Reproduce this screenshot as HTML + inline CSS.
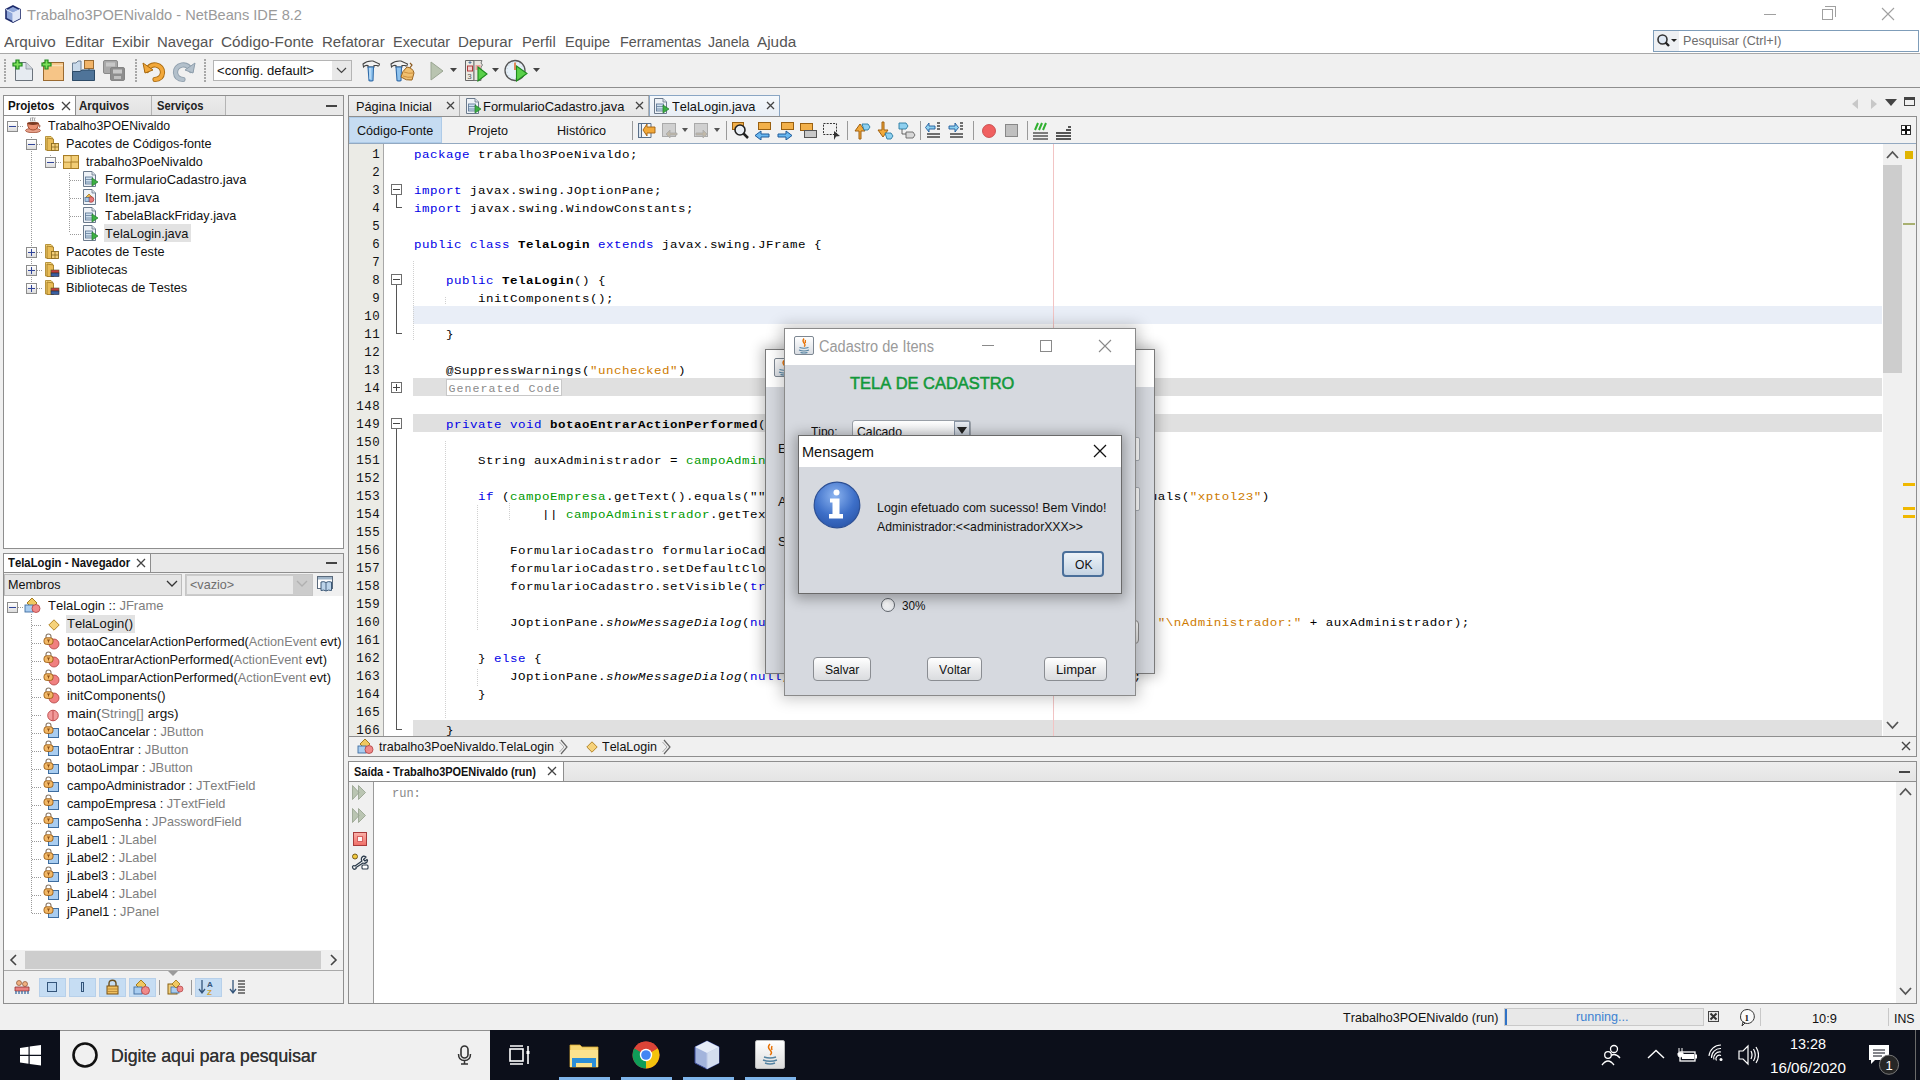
<!DOCTYPE html><html><head><meta charset="utf-8"><style>
html,body{margin:0;padding:0;width:1920px;height:1080px;overflow:hidden;background:#f0f0f0;}
body{position:relative;font-family:"Liberation Sans",sans-serif;}
.a{position:absolute;}
.t{position:absolute;white-space:pre;line-height:normal;font-kerning:none;}
</style></head><body>
<div class="a" style="left:0px;top:0px;width:1920px;height:53px;background:#ffffff;"></div>
<div class="a" style="left:0px;top:53px;width:1920px;height:1px;background:#a8a8a8;"></div>
<svg class="a" style="left:4px;top:5px;" width="18" height="18" viewBox="0 0 18 18"><path d="M9 1 L16 4.5 L16 13.5 L9 17 L2 13.5 L2 4.5 Z" fill="#8fa6d8" stroke="#1d2a6a" stroke-width="1.6"/><path d="M9 8 L16 4.5 M9 8 L2 4.5 M9 8 L9 17" stroke="#e8eefc" stroke-width="1"/><path d="M9 8 L16 4.5 L16 13.5 L9 17Z" fill="#dfe6f7"/></svg>
<div class="t" style="left:27px;top:6.78px;font-size:14.6px;color:#9a9a9a;font-family:'Liberation Sans', sans-serif;">Trabalho3POENivaldo - NetBeans IDE 8.2</div>
<div class="a" style="left:1764px;top:14px;width:12px;height:1px;background:#a0a0a0;"></div>
<div class="a" style="left:1822px;top:9px;width:11px;height:11px;border:1px solid #a0a0a0;box-sizing:border-box;"></div>
<div class="a" style="left:1825px;top:6px;width:11px;height:11px;border:1px solid #a0a0a0;box-sizing:border-box;border-left:none;border-bottom:none;"></div>
<svg class="a" style="left:1881px;top:7px;" width="14" height="14" viewBox="0 0 14 14"><path d="M1 1L13 13M13 1L1 13" stroke="#a0a0a0" stroke-width="1.1"/></svg>
<div class="t" style="left:3.8px;top:33.51px;font-size:14.9px;color:#555555;font-family:'Liberation Sans', sans-serif;transform:scaleX(1.0253);transform-origin:0 0;">Arquivo</div>
<div class="t" style="left:64.8px;top:33.51px;font-size:14.9px;color:#555555;font-family:'Liberation Sans', sans-serif;transform:scaleX(1.0110);transform-origin:0 0;">Editar</div>
<div class="t" style="left:111.7px;top:33.51px;font-size:14.9px;color:#555555;font-family:'Liberation Sans', sans-serif;transform:scaleX(1.0119);transform-origin:0 0;">Exibir</div>
<div class="t" style="left:156.5px;top:33.51px;font-size:14.9px;color:#555555;font-family:'Liberation Sans', sans-serif;transform:scaleX(1.0014);transform-origin:0 0;">Navegar</div>
<div class="t" style="left:221.1px;top:33.51px;font-size:14.9px;color:#555555;font-family:'Liberation Sans', sans-serif;transform:scaleX(1.0279);transform-origin:0 0;">Código-Fonte</div>
<div class="t" style="left:322.09999999999997px;top:33.51px;font-size:14.9px;color:#555555;font-family:'Liberation Sans', sans-serif;transform:scaleX(1.0095);transform-origin:0 0;">Refatorar</div>
<div class="t" style="left:393.2px;top:33.51px;font-size:14.9px;color:#555555;font-family:'Liberation Sans', sans-serif;transform:scaleX(0.9728);transform-origin:0 0;">Executar</div>
<div class="t" style="left:458.2px;top:33.51px;font-size:14.9px;color:#555555;font-family:'Liberation Sans', sans-serif;transform:scaleX(1.0162);transform-origin:0 0;">Depurar</div>
<div class="t" style="left:521.7px;top:33.51px;font-size:14.9px;color:#555555;font-family:'Liberation Sans', sans-serif;transform:scaleX(0.9927);transform-origin:0 0;">Perfil</div>
<div class="t" style="left:565.2px;top:33.51px;font-size:14.9px;color:#555555;font-family:'Liberation Sans', sans-serif;transform:scaleX(0.9742);transform-origin:0 0;">Equipe</div>
<div class="t" style="left:619.7px;top:33.51px;font-size:14.9px;color:#555555;font-family:'Liberation Sans', sans-serif;transform:scaleX(0.9614);transform-origin:0 0;">Ferramentas</div>
<div class="t" style="left:707.95px;top:33.51px;font-size:14.9px;color:#555555;font-family:'Liberation Sans', sans-serif;transform:scaleX(0.9440);transform-origin:0 0;">Janela</div>
<div class="t" style="left:757.2px;top:33.51px;font-size:14.9px;color:#555555;font-family:'Liberation Sans', sans-serif;transform:scaleX(1.0286);transform-origin:0 0;">Ajuda</div>
<div class="a" style="left:1653px;top:30px;width:266px;height:22px;background:#ffffff;border:1px solid #7f9db9;box-sizing:border-box;"></div>
<div class="a" style="left:1654px;top:31px;width:25px;height:20px;background:#eef0f3;"></div>
<svg class="a" style="left:1656px;top:33px;" width="22" height="16" viewBox="0 0 22 16"><circle cx="6.5" cy="6.5" r="4.5" fill="#dfe8f3" stroke="#333" stroke-width="1.6"/><path d="M9.5 9.5L13 13" stroke="#222" stroke-width="2.4"/><path d="M15 6L21 6L18 9Z" fill="#222"/></svg>
<div class="t" style="left:1683px;top:33.59px;font-size:12.6px;color:#6d6d6d;font-family:'Liberation Sans', sans-serif;">Pesquisar (Ctrl+I)</div>
<div class="a" style="left:0px;top:54px;width:1920px;height:33px;background:#f0f0f0;"></div>
<div class="a" style="left:0px;top:87px;width:1920px;height:1px;background:#8e8e8e;"></div>
<div class="a" style="left:3px;top:95px;width:341px;height:454px;background:#ffffff;border:1px solid #8e8e8e;box-sizing:border-box;"></div>
<div class="a" style="left:4px;top:96px;width:339px;height:19px;background:#e9e9e9;"></div>
<div class="a" style="left:4px;top:115px;width:339px;height:1px;background:#8e8e8e;"></div>
<div class="a" style="left:4px;top:96px;width:71px;height:19px;background:#ffffff;"></div>
<div class="a" style="left:75px;top:96px;width:1px;height:19px;background:#8e8e8e;"></div>
<div class="a" style="left:76px;top:96px;width:75px;height:19px;background:linear-gradient(#ececec,#e2e2e2);"></div>
<div class="a" style="left:151px;top:96px;width:1px;height:19px;background:#b4b4b4;"></div>
<div class="a" style="left:152px;top:96px;width:73px;height:19px;background:linear-gradient(#ececec,#e2e2e2);"></div>
<div class="a" style="left:225px;top:96px;width:1px;height:19px;background:#b4b4b4;"></div>
<div class="t" style="left:7.8px;top:98.77px;font-size:12.4px;color:#111;font-family:'Liberation Sans', sans-serif;font-weight:bold;transform:scaleX(0.9353);transform-origin:0 0;">Projetos</div>
<svg class="a" style="left:61px;top:101px;" width="10" height="10" viewBox="0 0 10 10"><path d="M1 1L9 9M9 1L1 9" stroke="#444" stroke-width="1.3"/></svg>
<div class="t" style="left:79.3px;top:98.77px;font-size:12.4px;color:#222;font-family:'Liberation Sans', sans-serif;font-weight:bold;transform:scaleX(0.9322);transform-origin:0 0;">Arquivos</div>
<div class="t" style="left:156.7px;top:98.77px;font-size:12.4px;color:#222;font-family:'Liberation Sans', sans-serif;font-weight:bold;transform:scaleX(0.9013);transform-origin:0 0;">Serviços</div>
<div class="a" style="left:326px;top:105px;width:11px;height:1px;background:#444;"></div>
<div class="a" style="left:326px;top:106px;width:11px;height:1px;background:#444;"></div>
<div class="a" style="left:3px;top:553px;width:341px;height:451px;background:#ffffff;border:1px solid #8e8e8e;box-sizing:border-box;"></div>
<div class="a" style="left:4px;top:554px;width:339px;height:19px;background:#e9e9e9;"></div>
<div class="a" style="left:4px;top:554px;width:146px;height:19px;background:#ffffff;"></div>
<div class="a" style="left:150px;top:554px;width:1px;height:19px;background:#8e8e8e;"></div>
<div class="a" style="left:4px;top:572px;width:339px;height:1px;background:#8e8e8e;"></div>
<div class="t" style="left:7.7px;top:555.77px;font-size:12.4px;color:#111;font-family:'Liberation Sans', sans-serif;font-weight:bold;transform:scaleX(0.9142);transform-origin:0 0;">TelaLogin - Navegador</div>
<svg class="a" style="left:136px;top:558px;" width="10" height="10" viewBox="0 0 10 10"><path d="M1 1L9 9M9 1L1 9" stroke="#444" stroke-width="1.3"/></svg>
<div class="a" style="left:326px;top:562px;width:11px;height:1px;background:#444;"></div>
<div class="a" style="left:326px;top:563px;width:11px;height:1px;background:#444;"></div>
<div class="a" style="left:4px;top:573px;width:339px;height:23px;background:#f0f0f0;"></div>
<div class="a" style="left:4px;top:574px;width:178px;height:22px;background:#e5e5e5;border:1px solid #bcbcbc;box-sizing:border-box;"></div>
<div class="t" style="left:8px;top:577.59px;font-size:12.6px;color:#111;font-family:'Liberation Sans', sans-serif;">Membros</div>
<svg class="a" style="left:166px;top:580px;" width="12" height="8" viewBox="0 0 12 8"><path d="M1 1L6 6L11 1" stroke="#333" stroke-width="1.3" fill="none"/></svg>
<div class="a" style="left:185px;top:574px;width:128px;height:22px;background:#cccccc;border:1px solid #c6c6c6;box-sizing:border-box;"></div>
<div class="a" style="left:187px;top:576px;width:106px;height:18px;background:#e9e9e9;"></div>
<div class="t" style="left:190px;top:577.59px;font-size:12.6px;color:#6e6e6e;font-family:'Liberation Sans', sans-serif;">&lt;vazio&gt;</div>
<svg class="a" style="left:296px;top:580px;" width="12" height="8" viewBox="0 0 12 8"><path d="M1 1L6 6L11 1" stroke="#b0b0b0" stroke-width="1.3" fill="none"/></svg>
<svg class="a" style="left:316px;top:575px;" width="18" height="17" viewBox="0 0 18 17"><rect x="1.5" y="1.5" width="15" height="12" fill="#ffffff" stroke="#5a6a7c" stroke-width="1"/><rect x="2" y="2" width="14" height="2.5" fill="#9fb4c8"/><path d="M5 7 Q8 6 10 7.5 Q12 6 15.5 7 V15.5 Q12 14.5 10 16 Q8 14.5 5 15.5Z" fill="#bcd4ea" stroke="#3e5a78" stroke-width="1"/><path d="M10 7.5 V16" stroke="#3e5a78" stroke-width="0.9"/></svg>
<div class="a" style="left:4px;top:950px;width:339px;height:20px;background:#f0f0f0;"></div>
<div class="a" style="left:25px;top:951px;width:296px;height:18px;background:#cdcdcd;"></div>
<svg class="a" style="left:9px;top:954px;" width="10" height="12" viewBox="0 0 10 12"><path d="M7 1L2 6L7 11" stroke="#444" stroke-width="1.6" fill="none"/></svg>
<svg class="a" style="left:328px;top:954px;" width="10" height="12" viewBox="0 0 10 12"><path d="M3 1L8 6L3 11" stroke="#444" stroke-width="1.6" fill="none"/></svg>
<div class="a" style="left:4px;top:970px;width:339px;height:1px;background:#a9a9a9;"></div>
<div class="a" style="left:4px;top:971px;width:339px;height:32px;background:#f0f0f0;"></div>
<div class="a" style="left:348px;top:95px;width:1569px;height:662px;background:#f0f0f0;"></div>
<div class="a" style="left:348px;top:116px;width:1569px;height:641px;background:#ffffff;border:1px solid #8e8e8e;box-sizing:border-box;"></div>
<div class="a" style="left:349px;top:117px;width:1567px;height:26px;background:#f2f2f2;"></div>
<div class="a" style="left:349px;top:143px;width:1567px;height:1px;background:#93a9c1;"></div>
<div class="a" style="left:349px;top:117px;width:93px;height:26px;background:#c6dcf2;border:1px solid #aecbe8;box-sizing:border-box;"></div>
<div class="t" style="left:357px;top:123.59px;font-size:12.6px;color:#111;font-family:'Liberation Sans', sans-serif;">Código-Fonte</div>
<div class="t" style="left:468px;top:123.59px;font-size:12.6px;color:#111;font-family:'Liberation Sans', sans-serif;">Projeto</div>
<div class="t" style="left:557px;top:123.59px;font-size:12.6px;color:#111;font-family:'Liberation Sans', sans-serif;">Histórico</div>
<div class="a" style="left:632px;top:121px;width:1px;height:19px;background:#9a9a9a;"></div>
<div class="a" style="left:349px;top:144px;width:34px;height:592px;background:#ebebe6;"></div>
<div class="a" style="left:383px;top:144px;width:1px;height:592px;background:#a8a8a8;"></div>
<div class="a" style="left:1883px;top:144px;width:33px;height:592px;background:#f0f0f0;"></div>
<div class="a" style="left:1883px;top:165px;width:19px;height:208px;background:#cdcdcd;"></div>
<svg class="a" style="left:1886px;top:150px;" width="13" height="9" viewBox="0 0 13 9"><path d="M1 8L6.5 2L12 8" stroke="#555" stroke-width="1.8" fill="none"/></svg>
<svg class="a" style="left:1886px;top:721px;" width="13" height="9" viewBox="0 0 13 9"><path d="M1 1L6.5 7L12 1" stroke="#555" stroke-width="1.8" fill="none"/></svg>
<div class="a" style="left:1905px;top:151px;width:8px;height:8px;background:#e0b400;"></div>
<div class="a" style="left:348px;top:736px;width:1569px;height:1px;background:#8e8e8e;"></div>
<div class="a" style="left:349px;top:737px;width:1567px;height:19px;background:#f0f0f0;"></div>
<div class="a" style="left:348px;top:756px;width:1569px;height:1px;background:#8e8e8e;"></div>
<div class="a" style="left:348px;top:761px;width:1569px;height:243px;background:#ffffff;border:1px solid #8e8e8e;box-sizing:border-box;"></div>
<div class="a" style="left:349px;top:762px;width:1567px;height:19px;background:linear-gradient(#eeeeee,#e4e4e4);"></div>
<div class="a" style="left:349px;top:762px;width:214px;height:19px;background:#ffffff;"></div>
<div class="a" style="left:563px;top:762px;width:1px;height:19px;background:#8e8e8e;"></div>
<div class="a" style="left:349px;top:781px;width:1567px;height:1px;background:#8e8e8e;"></div>
<div class="t" style="left:353.6px;top:764.77px;font-size:12.4px;color:#111;font-family:'Liberation Sans', sans-serif;font-weight:bold;transform:scaleX(0.8834);transform-origin:0 0;">Saída - Trabalho3POENivaldo (run)</div>
<svg class="a" style="left:547px;top:766px;" width="10" height="10" viewBox="0 0 10 10"><path d="M1 1L9 9M9 1L1 9" stroke="#444" stroke-width="1.3"/></svg>
<div class="a" style="left:1899px;top:771px;width:11px;height:1px;background:#444;"></div>
<div class="a" style="left:1899px;top:772px;width:11px;height:1px;background:#444;"></div>
<div class="a" style="left:349px;top:782px;width:24px;height:221px;background:#f0f0f0;"></div>
<div class="a" style="left:373px;top:782px;width:1px;height:221px;background:#9a9a9a;"></div>
<div class="a" style="left:1896px;top:782px;width:20px;height:221px;background:#f0f0f0;"></div>
<svg class="a" style="left:1899px;top:787px;" width="13" height="9" viewBox="0 0 13 9"><path d="M1 8L6.5 2L12 8" stroke="#555" stroke-width="1.8" fill="none"/></svg>
<svg class="a" style="left:1899px;top:987px;" width="13" height="9" viewBox="0 0 13 9"><path d="M1 1L6.5 7L12 1" stroke="#555" stroke-width="1.8" fill="none"/></svg>
<div class="t" style="left:392px;top:787.01px;font-size:12px;color:#888;font-family:'Liberation Mono', monospace;">run:</div>
<div class="a" style="left:0px;top:1004px;width:1920px;height:26px;background:#f0f0f0;"></div>
<div class="t" style="left:1343px;top:1010.59px;font-size:12.6px;color:#111;font-family:'Liberation Sans', sans-serif;">Trabalho3POENivaldo (run)</div>
<div class="a" style="left:1504px;top:1008px;width:200px;height:18px;background:#e8e8e8;border:1px solid #c9c9c9;box-sizing:border-box;"></div>
<div class="a" style="left:1505px;top:1009px;width:1px;height:16px;background:#3072c6;"></div>
<div class="a" style="left:1506px;top:1009px;width:1px;height:16px;background:#3072c6;"></div>
<div class="t" style="left:1576px;top:1009.59px;font-size:12.6px;color:#3c82d2;font-family:'Liberation Sans', sans-serif;">running...</div>
<div class="t" style="left:1812px;top:1011.41px;font-size:12.8px;color:#111;font-family:'Liberation Sans', sans-serif;">10:9</div>
<div class="a" style="left:1888px;top:1008px;width:1px;height:18px;background:#c8c8c8;"></div>
<div class="t" style="left:1894px;top:1011.41px;font-size:12.8px;color:#111;font-family:'Liberation Sans', sans-serif;transform:scaleX(0.9607);transform-origin:0 0;">INS</div>
<div class="a" style="left:1760px;top:1008px;width:1px;height:18px;background:#c8c8c8;"></div>
<div class="a" style="left:0px;top:1030px;width:1920px;height:50px;background:#0c0f1a;"></div>
<div class="a" style="left:60px;top:1030px;width:430px;height:50px;background:#f0f0f0;"></div>
<div class="a" style="left:60px;top:1030px;width:430px;height:1px;background:#8e8e8e;"></div>
<div class="t" style="left:111px;top:1045.98px;font-size:17.7px;color:#333;font-family:'Liberation Sans', sans-serif;">Digite aqui para pesquisar</div>
<div class="a" style="left:31px;top:137px;width:1px;height:151px;background:repeating-linear-gradient(180deg,#9a9a9a 0 1px,transparent 1px 2px);"></div>
<div class="a" style="left:50px;top:155px;width:1px;height:8px;background:repeating-linear-gradient(180deg,#9a9a9a 0 1px,transparent 1px 2px);"></div>
<div class="a" style="left:69px;top:173px;width:1px;height:60px;background:repeating-linear-gradient(180deg,#9a9a9a 0 1px,transparent 1px 2px);"></div>
<div class="a" style="left:104px;top:224px;width:87px;height:18px;background:#e2e2e2;"></div>
<div class="t" style="left:47.9px;top:118.59px;font-size:12.6px;color:#111;font-family:'Liberation Sans', sans-serif;transform:scaleX(0.9747);transform-origin:0 0;">Trabalho3POENivaldo</div>
<div class="a" style="left:7px;top:121px;width:11px;height:11px;box-sizing:border-box;border:1px solid #8c8c8c;background:linear-gradient(#ffffff,#dcdcdc);"></div>
<div class="a" style="left:9px;top:126px;width:7px;height:1px;background:#31459a;"></div>
<div class="a" style="left:18px;top:126px;width:6px;height:1px;background:repeating-linear-gradient(90deg,#9a9a9a 0 1px,transparent 1px 2px);"></div>
<svg class="a" style="left:25px;top:117px;" width="16" height="16" viewBox="0 0 16 16"><path d="M6 0.5 Q5 2.5 6 4.5 M8 0 Q7 2.5 8 4.5 M10 0.5 Q9 2.5 10 4.5" stroke="#777" stroke-width="0.8" fill="none"/><ellipse cx="8" cy="13.5" rx="7.5" ry="2.2" fill="#e6a08a" stroke="#a04a30" stroke-width="0.8"/><path d="M2.5 6 L13.5 6 Q13.5 13 8 13 Q2.5 13 2.5 6Z" fill="#e98f70" stroke="#9c4427" stroke-width="0.9"/><ellipse cx="8" cy="6.5" rx="5.3" ry="1.4" fill="#7a3a22"/><path d="M13.5 7.5 Q16 8 14.5 10.5" stroke="#9c4427" stroke-width="1" fill="none"/></svg>
<div class="t" style="left:66.39999999999999px;top:136.59px;font-size:12.6px;color:#111;font-family:'Liberation Sans', sans-serif;transform:scaleX(1.0049);transform-origin:0 0;">Pacotes de Códigos-fonte</div>
<div class="a" style="left:26px;top:139px;width:11px;height:11px;box-sizing:border-box;border:1px solid #8c8c8c;background:linear-gradient(#ffffff,#dcdcdc);"></div>
<div class="a" style="left:28px;top:144px;width:7px;height:1px;background:#31459a;"></div>
<div class="a" style="left:37px;top:144px;width:6px;height:1px;background:repeating-linear-gradient(90deg,#9a9a9a 0 1px,transparent 1px 2px);"></div>
<svg class="a" style="left:44px;top:135px;" width="16" height="17" viewBox="0 0 16 17"><path d="M1.5 1.5 L7 1.5 L8.5 3 L8.5 15 L1.5 15Z" fill="#f2d37a" stroke="#b08a30" stroke-width="0.9"/><path d="M3 3 L9.5 4 L9.5 15.5 L3 15.5Z" fill="#e9bd58" stroke="#a57c22" stroke-width="0.9"/><rect x="7.5" y="8.5" width="7" height="7" fill="#f3cf7a" stroke="#8a6a20" stroke-width="0.9"/><path d="M7.5 12H14.5M11 8.5V15.5" stroke="#8a6a20" stroke-width="0.8"/></svg>
<div class="t" style="left:85.5px;top:154.59px;font-size:12.6px;color:#111;font-family:'Liberation Sans', sans-serif;transform:scaleX(0.9976);transform-origin:0 0;">trabalho3PoeNivaldo</div>
<div class="a" style="left:45px;top:157px;width:11px;height:11px;box-sizing:border-box;border:1px solid #8c8c8c;background:linear-gradient(#ffffff,#dcdcdc);"></div>
<div class="a" style="left:47px;top:162px;width:7px;height:1px;background:#31459a;"></div>
<div class="a" style="left:56px;top:162px;width:6px;height:1px;background:repeating-linear-gradient(90deg,#9a9a9a 0 1px,transparent 1px 2px);"></div>
<svg class="a" style="left:63px;top:154px;" width="16" height="16" viewBox="0 0 16 16"><rect x="0.5" y="1.5" width="15" height="13" fill="#f2cd75" stroke="#a87d26" stroke-width="1"/><path d="M0.5 8H15.5M8 1.5V14.5" stroke="#a87d26" stroke-width="1"/><rect x="1.5" y="2.5" width="6" height="5" fill="#f8dc98"/></svg>
<div class="t" style="left:104.5px;top:172.59px;font-size:12.6px;color:#111;font-family:'Liberation Sans', sans-serif;transform:scaleX(1.0264);transform-origin:0 0;">FormularioCadastro.java</div>
<div class="a" style="left:70px;top:180px;width:11px;height:1px;background:repeating-linear-gradient(90deg,#9a9a9a 0 1px,transparent 1px 2px);"></div>
<svg class="a" style="left:82px;top:171px;" width="17" height="17" viewBox="0 0 17 17"><path d="M1.5 0.5 L10 0.5 L13.5 4 L13.5 15.5 L1.5 15.5Z" fill="#eef2f7" stroke="#6b7a8c" stroke-width="1"/><path d="M10 0.5 L10 4 L13.5 4" fill="#d8dee6" stroke="#6b7a8c" stroke-width="0.8"/><rect x="3.5" y="6" width="7" height="7" fill="#cfe0ef" stroke="#55708f" stroke-width="0.8"/><path d="M3.5 8.5H10.5M3.5 11H10.5" stroke="#55708f" stroke-width="0.7"/><path d="M10 7 L16 11 L10 15Z" fill="#3cb043" stroke="#207a28" stroke-width="0.7"/></svg>
<div class="t" style="left:104.5px;top:190.59px;font-size:12.6px;color:#111;font-family:'Liberation Sans', sans-serif;transform:scaleX(1.0661);transform-origin:0 0;">Item.java</div>
<div class="a" style="left:70px;top:198px;width:11px;height:1px;background:repeating-linear-gradient(90deg,#9a9a9a 0 1px,transparent 1px 2px);"></div>
<svg class="a" style="left:82px;top:189px;" width="17" height="17" viewBox="0 0 17 17"><path d="M1.5 0.5 L10 0.5 L13.5 4 L13.5 15.5 L1.5 15.5Z" fill="#eef2f7" stroke="#6b7a8c" stroke-width="1"/><path d="M10 0.5 L10 4 L13.5 4" fill="#d8dee6" stroke="#6b7a8c" stroke-width="0.8"/><path d="M7 5 L10 8 L7 11 L4 8Z" fill="#e8b850" stroke="#9a6a10" stroke-width="0.7"/><circle cx="9" cy="10.5" r="2.8" fill="#e67878" stroke="#a03030" stroke-width="0.7"/><rect x="3" y="8.5" width="4" height="4" fill="#a8c8e8" stroke="#4a6a8a" stroke-width="0.7"/></svg>
<div class="t" style="left:104.5px;top:208.59px;font-size:12.6px;color:#111;font-family:'Liberation Sans', sans-serif;transform:scaleX(1.0034);transform-origin:0 0;">TabelaBlackFriday.java</div>
<div class="a" style="left:70px;top:216px;width:11px;height:1px;background:repeating-linear-gradient(90deg,#9a9a9a 0 1px,transparent 1px 2px);"></div>
<svg class="a" style="left:82px;top:207px;" width="17" height="17" viewBox="0 0 17 17"><path d="M1.5 0.5 L10 0.5 L13.5 4 L13.5 15.5 L1.5 15.5Z" fill="#eef2f7" stroke="#6b7a8c" stroke-width="1"/><path d="M10 0.5 L10 4 L13.5 4" fill="#d8dee6" stroke="#6b7a8c" stroke-width="0.8"/><rect x="3.5" y="6" width="7" height="7" fill="#cfe0ef" stroke="#55708f" stroke-width="0.8"/><path d="M3.5 8.5H10.5M3.5 11H10.5" stroke="#55708f" stroke-width="0.7"/><path d="M10 7 L16 11 L10 15Z" fill="#3cb043" stroke="#207a28" stroke-width="0.7"/></svg>
<div class="t" style="left:104.5px;top:226.59px;font-size:12.6px;color:#111;font-family:'Liberation Sans', sans-serif;transform:scaleX(1.0164);transform-origin:0 0;">TelaLogin.java</div>
<div class="a" style="left:70px;top:234px;width:11px;height:1px;background:repeating-linear-gradient(90deg,#9a9a9a 0 1px,transparent 1px 2px);"></div>
<svg class="a" style="left:82px;top:225px;" width="17" height="17" viewBox="0 0 17 17"><path d="M1.5 0.5 L10 0.5 L13.5 4 L13.5 15.5 L1.5 15.5Z" fill="#eef2f7" stroke="#6b7a8c" stroke-width="1"/><path d="M10 0.5 L10 4 L13.5 4" fill="#d8dee6" stroke="#6b7a8c" stroke-width="0.8"/><rect x="3.5" y="6" width="7" height="7" fill="#cfe0ef" stroke="#55708f" stroke-width="0.8"/><path d="M3.5 8.5H10.5M3.5 11H10.5" stroke="#55708f" stroke-width="0.7"/><path d="M10 7 L16 11 L10 15Z" fill="#3cb043" stroke="#207a28" stroke-width="0.7"/></svg>
<div class="t" style="left:66.39999999999999px;top:244.59px;font-size:12.6px;color:#111;font-family:'Liberation Sans', sans-serif;transform:scaleX(1.0045);transform-origin:0 0;">Pacotes de Teste</div>
<div class="a" style="left:26px;top:247px;width:11px;height:11px;box-sizing:border-box;border:1px solid #8c8c8c;background:linear-gradient(#ffffff,#dcdcdc);"></div>
<div class="a" style="left:28px;top:252px;width:7px;height:1px;background:#31459a;"></div>
<div class="a" style="left:31px;top:249px;width:1px;height:7px;background:#31459a;"></div>
<div class="a" style="left:37px;top:252px;width:6px;height:1px;background:repeating-linear-gradient(90deg,#9a9a9a 0 1px,transparent 1px 2px);"></div>
<svg class="a" style="left:44px;top:243px;" width="16" height="17" viewBox="0 0 16 17"><path d="M1.5 1.5 L7 1.5 L8.5 3 L8.5 15 L1.5 15Z" fill="#f2d37a" stroke="#b08a30" stroke-width="0.9"/><path d="M3 3 L9.5 4 L9.5 15.5 L3 15.5Z" fill="#e9bd58" stroke="#a57c22" stroke-width="0.9"/><rect x="7.5" y="8.5" width="7" height="7" fill="#f3cf7a" stroke="#8a6a20" stroke-width="0.9"/><path d="M7.5 12H14.5M11 8.5V15.5" stroke="#8a6a20" stroke-width="0.8"/></svg>
<div class="t" style="left:66.39999999999999px;top:262.59px;font-size:12.6px;color:#111;font-family:'Liberation Sans', sans-serif;transform:scaleX(1.0093);transform-origin:0 0;">Bibliotecas</div>
<div class="a" style="left:26px;top:265px;width:11px;height:11px;box-sizing:border-box;border:1px solid #8c8c8c;background:linear-gradient(#ffffff,#dcdcdc);"></div>
<div class="a" style="left:28px;top:270px;width:7px;height:1px;background:#31459a;"></div>
<div class="a" style="left:31px;top:267px;width:1px;height:7px;background:#31459a;"></div>
<div class="a" style="left:37px;top:270px;width:6px;height:1px;background:repeating-linear-gradient(90deg,#9a9a9a 0 1px,transparent 1px 2px);"></div>
<svg class="a" style="left:44px;top:261px;" width="16" height="17" viewBox="0 0 16 17"><path d="M1.5 1.5 L7 1.5 L8.5 3 L8.5 15 L1.5 15Z" fill="#f2d37a" stroke="#b08a30" stroke-width="0.9"/><path d="M3 3 L9.5 4 L9.5 15.5 L3 15.5Z" fill="#e9bd58" stroke="#a57c22" stroke-width="0.9"/><rect x="7" y="9" width="8" height="3" fill="#c23e3e" stroke="#552" stroke-width="0.6"/><rect x="7" y="12" width="8" height="3.5" fill="#3a5fa0" stroke="#223" stroke-width="0.6"/></svg>
<div class="t" style="left:66.39999999999999px;top:280.59px;font-size:12.6px;color:#111;font-family:'Liberation Sans', sans-serif;transform:scaleX(1.0120);transform-origin:0 0;">Bibliotecas de Testes</div>
<div class="a" style="left:26px;top:283px;width:11px;height:11px;box-sizing:border-box;border:1px solid #8c8c8c;background:linear-gradient(#ffffff,#dcdcdc);"></div>
<div class="a" style="left:28px;top:288px;width:7px;height:1px;background:#31459a;"></div>
<div class="a" style="left:31px;top:285px;width:1px;height:7px;background:#31459a;"></div>
<div class="a" style="left:37px;top:288px;width:6px;height:1px;background:repeating-linear-gradient(90deg,#9a9a9a 0 1px,transparent 1px 2px);"></div>
<svg class="a" style="left:44px;top:279px;" width="16" height="17" viewBox="0 0 16 17"><path d="M1.5 1.5 L7 1.5 L8.5 3 L8.5 15 L1.5 15Z" fill="#f2d37a" stroke="#b08a30" stroke-width="0.9"/><path d="M3 3 L9.5 4 L9.5 15.5 L3 15.5Z" fill="#e9bd58" stroke="#a57c22" stroke-width="0.9"/><rect x="7" y="9" width="8" height="3" fill="#c23e3e" stroke="#552" stroke-width="0.6"/><rect x="7" y="12" width="8" height="3.5" fill="#3a5fa0" stroke="#223" stroke-width="0.6"/></svg>
<div class="a" style="left:31px;top:614px;width:1px;height:300px;background:repeating-linear-gradient(180deg,#9a9a9a 0 1px,transparent 1px 2px);"></div>
<div class="a" style="left:66px;top:615px;width:69px;height:18px;background:#e2e2e2;"></div>
<div class="t" style="left:47.599999999999994px;top:599.09px;font-size:12.6px;transform:scaleX(1.0308);transform-origin:0 0;"><span style="color:#111">TelaLogin :: </span><span style="color:#7e7e7e">JFrame</span></div>
<div class="a" style="left:7px;top:601.5px;width:11px;height:11px;box-sizing:border-box;border:1px solid #8c8c8c;background:linear-gradient(#ffffff,#dcdcdc);"></div>
<div class="a" style="left:9px;top:606.5px;width:7px;height:1px;background:#31459a;"></div>
<div class="a" style="left:18px;top:606.5px;width:6px;height:1px;background:repeating-linear-gradient(90deg,#9a9a9a 0 1px,transparent 1px 2px);"></div>
<svg class="a" style="left:24px;top:597px;" width="18" height="17" viewBox="0 0 18 17"><path d="M8 1 L13 6 L8 11 L3 6Z" fill="#f0c860" stroke="#9a7010" stroke-width="0.9"/><rect x="1" y="8" width="8" height="7" fill="#a9cdf0" stroke="#3f6ea0" stroke-width="0.9"/><circle cx="12" cy="11.5" r="4" fill="#f08a8a" stroke="#b04040" stroke-width="0.8"/></svg>
<div class="t" style="left:66.5px;top:617.09px;font-size:12.6px;transform:scaleX(1.0356);transform-origin:0 0;"><span style="color:#111">TelaLogin()</span></div>
<div class="a" style="left:32px;top:624.5px;width:10px;height:1px;background:repeating-linear-gradient(90deg,#9a9a9a 0 1px,transparent 1px 2px);"></div>
<svg class="a" style="left:48px;top:618.5px;" width="12" height="12" viewBox="0 0 12 12"><path d="M6 0.8 L11.2 6 L6 11.2 L0.8 6Z" fill="#f6d27a" stroke="#b5862a" stroke-width="1"/></svg>
<div class="t" style="left:66.5px;top:635.09px;font-size:12.6px;transform:scaleX(1.0105);transform-origin:0 0;"><span style="color:#111">botaoCancelarActionPerformed(</span><span style="color:#7e7e7e">ActionEvent</span><span style="color:#111"> evt)</span></div>
<div class="a" style="left:32px;top:642.5px;width:10px;height:1px;background:repeating-linear-gradient(90deg,#9a9a9a 0 1px,transparent 1px 2px);"></div>
<svg class="a" style="left:43px;top:632.5px;" width="17" height="17" viewBox="0 0 17 17"><circle cx="11" cy="11" r="5" fill="#f08080" stroke="#b04040" stroke-width="0.8"/></svg>
<svg class="a" style="left:43px;top:632.5px;" width="11" height="12" viewBox="0 0 11 12"><path d="M3 5 V3.5 Q3 1 5.5 1 Q8 1 8 3.5 V5" stroke="#8a7a6a" stroke-width="1.1" fill="none"/><rect x="1" y="4.8" width="9" height="6.6" rx="2.5" fill="#f2b866" stroke="#9a5a10" stroke-width="0.9"/><path d="M4 7 H7 M5.5 7 V9.5" stroke="#8a4a10" stroke-width="0.9"/></svg>
<div class="t" style="left:66.5px;top:653.09px;font-size:12.6px;transform:scaleX(1.0171);transform-origin:0 0;"><span style="color:#111">botaoEntrarActionPerformed(</span><span style="color:#7e7e7e">ActionEvent</span><span style="color:#111"> evt)</span></div>
<div class="a" style="left:32px;top:660.5px;width:10px;height:1px;background:repeating-linear-gradient(90deg,#9a9a9a 0 1px,transparent 1px 2px);"></div>
<svg class="a" style="left:43px;top:650.5px;" width="17" height="17" viewBox="0 0 17 17"><circle cx="11" cy="11" r="5" fill="#f08080" stroke="#b04040" stroke-width="0.8"/></svg>
<svg class="a" style="left:43px;top:650.5px;" width="11" height="12" viewBox="0 0 11 12"><path d="M3 5 V3.5 Q3 1 5.5 1 Q8 1 8 3.5 V5" stroke="#8a7a6a" stroke-width="1.1" fill="none"/><rect x="1" y="4.8" width="9" height="6.6" rx="2.5" fill="#f2b866" stroke="#9a5a10" stroke-width="0.9"/><path d="M4 7 H7 M5.5 7 V9.5" stroke="#8a4a10" stroke-width="0.9"/></svg>
<div class="t" style="left:66.5px;top:671.09px;font-size:12.6px;transform:scaleX(1.0161);transform-origin:0 0;"><span style="color:#111">botaoLimparActionPerformed(</span><span style="color:#7e7e7e">ActionEvent</span><span style="color:#111"> evt)</span></div>
<div class="a" style="left:32px;top:678.5px;width:10px;height:1px;background:repeating-linear-gradient(90deg,#9a9a9a 0 1px,transparent 1px 2px);"></div>
<svg class="a" style="left:43px;top:668.5px;" width="17" height="17" viewBox="0 0 17 17"><circle cx="11" cy="11" r="5" fill="#f08080" stroke="#b04040" stroke-width="0.8"/></svg>
<svg class="a" style="left:43px;top:668.5px;" width="11" height="12" viewBox="0 0 11 12"><path d="M3 5 V3.5 Q3 1 5.5 1 Q8 1 8 3.5 V5" stroke="#8a7a6a" stroke-width="1.1" fill="none"/><rect x="1" y="4.8" width="9" height="6.6" rx="2.5" fill="#f2b866" stroke="#9a5a10" stroke-width="0.9"/><path d="M4 7 H7 M5.5 7 V9.5" stroke="#8a4a10" stroke-width="0.9"/></svg>
<div class="t" style="left:66.5px;top:689.09px;font-size:12.6px;transform:scaleX(1.0277);transform-origin:0 0;"><span style="color:#111">initComponents()</span></div>
<div class="a" style="left:32px;top:696.5px;width:10px;height:1px;background:repeating-linear-gradient(90deg,#9a9a9a 0 1px,transparent 1px 2px);"></div>
<svg class="a" style="left:43px;top:686.5px;" width="17" height="17" viewBox="0 0 17 17"><circle cx="11" cy="11" r="5" fill="#f08080" stroke="#b04040" stroke-width="0.8"/></svg>
<svg class="a" style="left:43px;top:686.5px;" width="11" height="12" viewBox="0 0 11 12"><path d="M3 5 V3.5 Q3 1 5.5 1 Q8 1 8 3.5 V5" stroke="#8a7a6a" stroke-width="1.1" fill="none"/><rect x="1" y="4.8" width="9" height="6.6" rx="2.5" fill="#f2b866" stroke="#9a5a10" stroke-width="0.9"/><path d="M4 7 H7 M5.5 7 V9.5" stroke="#8a4a10" stroke-width="0.9"/></svg>
<div class="t" style="left:66.5px;top:707.09px;font-size:12.6px;transform:scaleX(1.0769);transform-origin:0 0;"><span style="color:#111">main(</span><span style="color:#7e7e7e">String[]</span><span style="color:#111"> args)</span></div>
<div class="a" style="left:32px;top:714.5px;width:10px;height:1px;background:repeating-linear-gradient(90deg,#9a9a9a 0 1px,transparent 1px 2px);"></div>
<svg class="a" style="left:47px;top:708.5px;" width="12" height="13" viewBox="0 0 12 13"><circle cx="6" cy="6.5" r="5.3" fill="#f29a9a" stroke="#b44" stroke-width="0.9"/><path d="M6 1.2V11.8" stroke="#b44" stroke-width="0.9"/></svg>
<div class="t" style="left:66.5px;top:725.09px;font-size:12.6px;transform:scaleX(1.0112);transform-origin:0 0;"><span style="color:#111">botaoCancelar : </span><span style="color:#7e7e7e">JButton</span></div>
<div class="a" style="left:32px;top:732.5px;width:10px;height:1px;background:repeating-linear-gradient(90deg,#9a9a9a 0 1px,transparent 1px 2px);"></div>
<svg class="a" style="left:43px;top:721.5px;" width="17" height="17" viewBox="0 0 17 17"><rect x="5.5" y="6.5" width="10" height="9" fill="#a9cdf0" stroke="#3f6ea0" stroke-width="1"/></svg>
<svg class="a" style="left:43px;top:721.5px;" width="11" height="12" viewBox="0 0 11 12"><path d="M3 5 V3.5 Q3 1 5.5 1 Q8 1 8 3.5 V5" stroke="#8a7a6a" stroke-width="1.1" fill="none"/><rect x="1" y="4.8" width="9" height="6.6" rx="2.5" fill="#f2b866" stroke="#9a5a10" stroke-width="0.9"/><path d="M4 7 H7 M5.5 7 V9.5" stroke="#8a4a10" stroke-width="0.9"/></svg>
<div class="t" style="left:66.5px;top:743.09px;font-size:12.6px;transform:scaleX(1.0195);transform-origin:0 0;"><span style="color:#111">botaoEntrar : </span><span style="color:#7e7e7e">JButton</span></div>
<div class="a" style="left:32px;top:750.5px;width:10px;height:1px;background:repeating-linear-gradient(90deg,#9a9a9a 0 1px,transparent 1px 2px);"></div>
<svg class="a" style="left:43px;top:739.5px;" width="17" height="17" viewBox="0 0 17 17"><rect x="5.5" y="6.5" width="10" height="9" fill="#a9cdf0" stroke="#3f6ea0" stroke-width="1"/></svg>
<svg class="a" style="left:43px;top:739.5px;" width="11" height="12" viewBox="0 0 11 12"><path d="M3 5 V3.5 Q3 1 5.5 1 Q8 1 8 3.5 V5" stroke="#8a7a6a" stroke-width="1.1" fill="none"/><rect x="1" y="4.8" width="9" height="6.6" rx="2.5" fill="#f2b866" stroke="#9a5a10" stroke-width="0.9"/><path d="M4 7 H7 M5.5 7 V9.5" stroke="#8a4a10" stroke-width="0.9"/></svg>
<div class="t" style="left:66.5px;top:761.09px;font-size:12.6px;transform:scaleX(1.0201);transform-origin:0 0;"><span style="color:#111">botaoLimpar : </span><span style="color:#7e7e7e">JButton</span></div>
<div class="a" style="left:32px;top:768.5px;width:10px;height:1px;background:repeating-linear-gradient(90deg,#9a9a9a 0 1px,transparent 1px 2px);"></div>
<svg class="a" style="left:43px;top:757.5px;" width="17" height="17" viewBox="0 0 17 17"><rect x="5.5" y="6.5" width="10" height="9" fill="#a9cdf0" stroke="#3f6ea0" stroke-width="1"/></svg>
<svg class="a" style="left:43px;top:757.5px;" width="11" height="12" viewBox="0 0 11 12"><path d="M3 5 V3.5 Q3 1 5.5 1 Q8 1 8 3.5 V5" stroke="#8a7a6a" stroke-width="1.1" fill="none"/><rect x="1" y="4.8" width="9" height="6.6" rx="2.5" fill="#f2b866" stroke="#9a5a10" stroke-width="0.9"/><path d="M4 7 H7 M5.5 7 V9.5" stroke="#8a4a10" stroke-width="0.9"/></svg>
<div class="t" style="left:66.5px;top:779.09px;font-size:12.6px;transform:scaleX(1.0235);transform-origin:0 0;"><span style="color:#111">campoAdministrador : </span><span style="color:#7e7e7e">JTextField</span></div>
<div class="a" style="left:32px;top:786.5px;width:10px;height:1px;background:repeating-linear-gradient(90deg,#9a9a9a 0 1px,transparent 1px 2px);"></div>
<svg class="a" style="left:43px;top:775.5px;" width="17" height="17" viewBox="0 0 17 17"><rect x="5.5" y="6.5" width="10" height="9" fill="#a9cdf0" stroke="#3f6ea0" stroke-width="1"/></svg>
<svg class="a" style="left:43px;top:775.5px;" width="11" height="12" viewBox="0 0 11 12"><path d="M3 5 V3.5 Q3 1 5.5 1 Q8 1 8 3.5 V5" stroke="#8a7a6a" stroke-width="1.1" fill="none"/><rect x="1" y="4.8" width="9" height="6.6" rx="2.5" fill="#f2b866" stroke="#9a5a10" stroke-width="0.9"/><path d="M4 7 H7 M5.5 7 V9.5" stroke="#8a4a10" stroke-width="0.9"/></svg>
<div class="t" style="left:66.5px;top:797.09px;font-size:12.6px;transform:scaleX(1.0105);transform-origin:0 0;"><span style="color:#111">campoEmpresa : </span><span style="color:#7e7e7e">JTextField</span></div>
<div class="a" style="left:32px;top:804.5px;width:10px;height:1px;background:repeating-linear-gradient(90deg,#9a9a9a 0 1px,transparent 1px 2px);"></div>
<svg class="a" style="left:43px;top:793.5px;" width="17" height="17" viewBox="0 0 17 17"><rect x="5.5" y="6.5" width="10" height="9" fill="#a9cdf0" stroke="#3f6ea0" stroke-width="1"/></svg>
<svg class="a" style="left:43px;top:793.5px;" width="11" height="12" viewBox="0 0 11 12"><path d="M3 5 V3.5 Q3 1 5.5 1 Q8 1 8 3.5 V5" stroke="#8a7a6a" stroke-width="1.1" fill="none"/><rect x="1" y="4.8" width="9" height="6.6" rx="2.5" fill="#f2b866" stroke="#9a5a10" stroke-width="0.9"/><path d="M4 7 H7 M5.5 7 V9.5" stroke="#8a4a10" stroke-width="0.9"/></svg>
<div class="t" style="left:66.5px;top:815.09px;font-size:12.6px;transform:scaleX(1.0047);transform-origin:0 0;"><span style="color:#111">campoSenha : </span><span style="color:#7e7e7e">JPasswordField</span></div>
<div class="a" style="left:32px;top:822.5px;width:10px;height:1px;background:repeating-linear-gradient(90deg,#9a9a9a 0 1px,transparent 1px 2px);"></div>
<svg class="a" style="left:43px;top:811.5px;" width="17" height="17" viewBox="0 0 17 17"><rect x="5.5" y="6.5" width="10" height="9" fill="#a9cdf0" stroke="#3f6ea0" stroke-width="1"/></svg>
<svg class="a" style="left:43px;top:811.5px;" width="11" height="12" viewBox="0 0 11 12"><path d="M3 5 V3.5 Q3 1 5.5 1 Q8 1 8 3.5 V5" stroke="#8a7a6a" stroke-width="1.1" fill="none"/><rect x="1" y="4.8" width="9" height="6.6" rx="2.5" fill="#f2b866" stroke="#9a5a10" stroke-width="0.9"/><path d="M4 7 H7 M5.5 7 V9.5" stroke="#8a4a10" stroke-width="0.9"/></svg>
<div class="t" style="left:66.5px;top:833.09px;font-size:12.6px;transform:scaleX(1.0140);transform-origin:0 0;"><span style="color:#111">jLabel1 : </span><span style="color:#7e7e7e">JLabel</span></div>
<div class="a" style="left:32px;top:840.5px;width:10px;height:1px;background:repeating-linear-gradient(90deg,#9a9a9a 0 1px,transparent 1px 2px);"></div>
<svg class="a" style="left:43px;top:829.5px;" width="17" height="17" viewBox="0 0 17 17"><rect x="5.5" y="6.5" width="10" height="9" fill="#a9cdf0" stroke="#3f6ea0" stroke-width="1"/></svg>
<svg class="a" style="left:43px;top:829.5px;" width="11" height="12" viewBox="0 0 11 12"><path d="M3 5 V3.5 Q3 1 5.5 1 Q8 1 8 3.5 V5" stroke="#8a7a6a" stroke-width="1.1" fill="none"/><rect x="1" y="4.8" width="9" height="6.6" rx="2.5" fill="#f2b866" stroke="#9a5a10" stroke-width="0.9"/><path d="M4 7 H7 M5.5 7 V9.5" stroke="#8a4a10" stroke-width="0.9"/></svg>
<div class="t" style="left:66.5px;top:851.09px;font-size:12.6px;transform:scaleX(1.0140);transform-origin:0 0;"><span style="color:#111">jLabel2 : </span><span style="color:#7e7e7e">JLabel</span></div>
<div class="a" style="left:32px;top:858.5px;width:10px;height:1px;background:repeating-linear-gradient(90deg,#9a9a9a 0 1px,transparent 1px 2px);"></div>
<svg class="a" style="left:43px;top:847.5px;" width="17" height="17" viewBox="0 0 17 17"><rect x="5.5" y="6.5" width="10" height="9" fill="#a9cdf0" stroke="#3f6ea0" stroke-width="1"/></svg>
<svg class="a" style="left:43px;top:847.5px;" width="11" height="12" viewBox="0 0 11 12"><path d="M3 5 V3.5 Q3 1 5.5 1 Q8 1 8 3.5 V5" stroke="#8a7a6a" stroke-width="1.1" fill="none"/><rect x="1" y="4.8" width="9" height="6.6" rx="2.5" fill="#f2b866" stroke="#9a5a10" stroke-width="0.9"/><path d="M4 7 H7 M5.5 7 V9.5" stroke="#8a4a10" stroke-width="0.9"/></svg>
<div class="t" style="left:66.5px;top:869.09px;font-size:12.6px;transform:scaleX(1.0140);transform-origin:0 0;"><span style="color:#111">jLabel3 : </span><span style="color:#7e7e7e">JLabel</span></div>
<div class="a" style="left:32px;top:876.5px;width:10px;height:1px;background:repeating-linear-gradient(90deg,#9a9a9a 0 1px,transparent 1px 2px);"></div>
<svg class="a" style="left:43px;top:865.5px;" width="17" height="17" viewBox="0 0 17 17"><rect x="5.5" y="6.5" width="10" height="9" fill="#a9cdf0" stroke="#3f6ea0" stroke-width="1"/></svg>
<svg class="a" style="left:43px;top:865.5px;" width="11" height="12" viewBox="0 0 11 12"><path d="M3 5 V3.5 Q3 1 5.5 1 Q8 1 8 3.5 V5" stroke="#8a7a6a" stroke-width="1.1" fill="none"/><rect x="1" y="4.8" width="9" height="6.6" rx="2.5" fill="#f2b866" stroke="#9a5a10" stroke-width="0.9"/><path d="M4 7 H7 M5.5 7 V9.5" stroke="#8a4a10" stroke-width="0.9"/></svg>
<div class="t" style="left:66.5px;top:887.09px;font-size:12.6px;transform:scaleX(1.0140);transform-origin:0 0;"><span style="color:#111">jLabel4 : </span><span style="color:#7e7e7e">JLabel</span></div>
<div class="a" style="left:32px;top:894.5px;width:10px;height:1px;background:repeating-linear-gradient(90deg,#9a9a9a 0 1px,transparent 1px 2px);"></div>
<svg class="a" style="left:43px;top:883.5px;" width="17" height="17" viewBox="0 0 17 17"><rect x="5.5" y="6.5" width="10" height="9" fill="#a9cdf0" stroke="#3f6ea0" stroke-width="1"/></svg>
<svg class="a" style="left:43px;top:883.5px;" width="11" height="12" viewBox="0 0 11 12"><path d="M3 5 V3.5 Q3 1 5.5 1 Q8 1 8 3.5 V5" stroke="#8a7a6a" stroke-width="1.1" fill="none"/><rect x="1" y="4.8" width="9" height="6.6" rx="2.5" fill="#f2b866" stroke="#9a5a10" stroke-width="0.9"/><path d="M4 7 H7 M5.5 7 V9.5" stroke="#8a4a10" stroke-width="0.9"/></svg>
<div class="t" style="left:66.5px;top:905.09px;font-size:12.6px;transform:scaleX(1.0103);transform-origin:0 0;"><span style="color:#111">jPanel1 : </span><span style="color:#7e7e7e">JPanel</span></div>
<div class="a" style="left:32px;top:912.5px;width:10px;height:1px;background:repeating-linear-gradient(90deg,#9a9a9a 0 1px,transparent 1px 2px);"></div>
<svg class="a" style="left:43px;top:901.5px;" width="17" height="17" viewBox="0 0 17 17"><rect x="5.5" y="6.5" width="10" height="9" fill="#a9cdf0" stroke="#3f6ea0" stroke-width="1"/></svg>
<svg class="a" style="left:43px;top:901.5px;" width="11" height="12" viewBox="0 0 11 12"><path d="M3 5 V3.5 Q3 1 5.5 1 Q8 1 8 3.5 V5" stroke="#8a7a6a" stroke-width="1.1" fill="none"/><rect x="1" y="4.8" width="9" height="6.6" rx="2.5" fill="#f2b866" stroke="#9a5a10" stroke-width="0.9"/><path d="M4 7 H7 M5.5 7 V9.5" stroke="#8a4a10" stroke-width="0.9"/></svg>
<svg class="a" style="left:14px;top:978px;" width="17" height="17" viewBox="0 0 17 17"><circle cx="5" cy="5" r="2.5" fill="#f0b080" stroke="#8a5030" stroke-width="0.7"/><circle cx="11" cy="6" r="2.5" fill="#f0b080" stroke="#8a5030" stroke-width="0.7"/><path d="M1 9 H15 V13 H1Z" fill="#e98080" stroke="#903030" stroke-width="0.8"/><path d="M2 13 V16 M5 13V16 M8 13V16 M11 13V16 M14 13V16" stroke="#3a6aa0" stroke-width="1.3"/></svg>
<div class="a" style="left:39px;top:978px;width:27px;height:19px;background:#c6ddf3;border:1px solid #b7d0ea;box-sizing:border-box;"></div>
<div class="a" style="left:69px;top:978px;width:27px;height:19px;background:#c6ddf3;border:1px solid #b7d0ea;box-sizing:border-box;"></div>
<div class="a" style="left:99px;top:978px;width:27px;height:19px;background:#c6ddf3;border:1px solid #b7d0ea;box-sizing:border-box;"></div>
<div class="a" style="left:129px;top:978px;width:27px;height:19px;background:#c6ddf3;border:1px solid #b7d0ea;box-sizing:border-box;"></div>
<div class="a" style="left:195px;top:978px;width:27px;height:19px;background:#c6ddf3;border:1px solid #b7d0ea;box-sizing:border-box;"></div>
<div class="a" style="left:47px;top:982px;width:10px;height:10px;background:#b9d5f0;border:1px solid #34557a;box-sizing:border-box;"></div>
<div class="a" style="left:81px;top:982px;width:3px;height:10px;background:#b9d5f0;border:1px solid #34557a;box-sizing:border-box;"></div>
<svg class="a" style="left:104px;top:979px;" width="17" height="16" viewBox="0 0 17 16"><path d="M5 7 V4.5 Q5 1.2 8.5 1.2 Q12 1.2 12 4.5 V7" stroke="#6a5020" stroke-width="1.4" fill="none"/><rect x="3" y="7" width="11" height="8" fill="#f0c060" stroke="#7a5010" stroke-width="1"/><path d="M3 10H14M3 12.5H14" stroke="#b08030" stroke-width="0.8"/></svg>
<svg class="a" style="left:133px;top:979px;" width="20" height="17" viewBox="0 0 20 17"><path d="M8 1 L13 6 L8 11 L3 6Z" fill="#f0c860" stroke="#9a7010" stroke-width="0.9"/><rect x="1" y="8" width="8" height="7" fill="#a9cdf0" stroke="#3f6ea0" stroke-width="0.9"/><circle cx="12.5" cy="11.5" r="4" fill="#f08a8a" stroke="#b04040" stroke-width="0.8"/></svg>
<div class="a" style="left:159px;top:980px;width:1px;height:15px;background:#9a9a9a;"></div>
<svg class="a" style="left:167px;top:979px;" width="17" height="17" viewBox="0 0 17 17"><rect x="1" y="5" width="9" height="10" fill="#f0d080" stroke="#8a6010" stroke-width="1"/><rect x="4" y="8" width="8" height="6" fill="#a9cdf0" stroke="#3f6ea0" stroke-width="0.8"/><path d="M9 1 L13 5 L9 9 L5 5Z" fill="#f0c860" stroke="#9a7010" stroke-width="0.8"/><circle cx="13" cy="10" r="3" fill="#f08a8a" stroke="#b04040" stroke-width="0.7"/></svg>
<div class="a" style="left:191px;top:980px;width:1px;height:15px;background:#9a9a9a;"></div>
<svg class="a" style="left:198px;top:979px;" width="20" height="17" viewBox="0 0 20 17"><path d="M4 1V13 M1 10 L4 14 L7 10" stroke="#34557a" stroke-width="1.3" fill="none"/><text x="9" y="7.5" font-size="8" font-family="Liberation Sans" font-weight="bold" fill="#34557a">A</text><text x="9" y="16" font-size="8" font-family="Liberation Sans" font-weight="bold" fill="#d0a030">Z</text></svg>
<svg class="a" style="left:229px;top:979px;" width="20" height="17" viewBox="0 0 20 17"><path d="M4 1V13 M1 10 L4 14 L7 10" stroke="#34557a" stroke-width="1.3" fill="none"/><path d="M9 2H16M9 5H16M9 8H16M9 11H16M9 14H16" stroke="#555" stroke-width="1.5"/></svg>
<svg class="a" style="left:168px;top:971px;" width="10" height="5" viewBox="0 0 10 5"><path d="M0 0H10L5 5Z" fill="#9a9a9a"/></svg>
<div class="a" style="left:413px;top:306px;width:1469px;height:18px;background:#e9eef7;"></div>
<div class="a" style="left:413px;top:378px;width:1469px;height:18px;background:#e0e0e0;"></div>
<div class="a" style="left:413px;top:414px;width:1469px;height:18px;background:#e0e0e0;"></div>
<div class="a" style="left:413px;top:720px;width:1469px;height:16px;background:#e0e0e0;"></div>
<div class="a" style="left:1053px;top:144px;width:1px;height:592px;background:#f2c4c4;"></div>
<div class="a" style="left:413px;top:261px;width:1px;height:80px;background:repeating-linear-gradient(180deg,#d0d0d0 0 1px,transparent 1px 2px);"></div>
<div class="a" style="left:445px;top:297px;width:1px;height:8px;background:repeating-linear-gradient(180deg,#d0d0d0 0 1px,transparent 1px 2px);"></div>
<div class="a" style="left:445px;top:441px;width:1px;height:277px;background:repeating-linear-gradient(180deg,#d0d0d0 0 1px,transparent 1px 2px);"></div>
<div class="a" style="left:477px;top:505px;width:1px;height:125px;background:repeating-linear-gradient(180deg,#d0d0d0 0 1px,transparent 1px 2px);"></div>
<div class="a" style="left:509px;top:503px;width:1px;height:18px;background:repeating-linear-gradient(180deg,#d0d0d0 0 1px,transparent 1px 2px);"></div>
<div class="a" style="left:477px;top:669px;width:1px;height:17px;background:repeating-linear-gradient(180deg,#d0d0d0 0 1px,transparent 1px 2px);"></div>
<div class="t" style="left:372.28px;top:147.68px;font-size:12.4px;color:#111;font-family:'Liberation Mono', monospace;letter-spacing:0.56px;">1</div>
<div class="t" style="left:413.71px;top:148.34px;font-size:11.6px;font-family:'Liberation Mono', monospace;letter-spacing:0.468px;transform:scaleX(1.0770);transform-origin:0 0;"><span style="color:#0000e6;">package</span><span style="color:#000000;"> trabalho3PoeNivaldo;</span></div>
<div class="t" style="left:372.28px;top:165.68px;font-size:12.4px;color:#111;font-family:'Liberation Mono', monospace;letter-spacing:0.56px;">2</div>
<div class="t" style="left:372.28px;top:183.68px;font-size:12.4px;color:#111;font-family:'Liberation Mono', monospace;letter-spacing:0.56px;">3</div>
<div class="t" style="left:413.71px;top:184.34px;font-size:11.6px;font-family:'Liberation Mono', monospace;letter-spacing:0.468px;transform:scaleX(1.0770);transform-origin:0 0;"><span style="color:#0000e6;">import</span><span style="color:#000000;"> javax.swing.JOptionPane;</span></div>
<div class="t" style="left:372.28px;top:201.68px;font-size:12.4px;color:#111;font-family:'Liberation Mono', monospace;letter-spacing:0.56px;">4</div>
<div class="t" style="left:413.71px;top:202.34px;font-size:11.6px;font-family:'Liberation Mono', monospace;letter-spacing:0.468px;transform:scaleX(1.0770);transform-origin:0 0;"><span style="color:#0000e6;">import</span><span style="color:#000000;"> javax.swing.WindowConstants;</span></div>
<div class="t" style="left:372.28px;top:219.68px;font-size:12.4px;color:#111;font-family:'Liberation Mono', monospace;letter-spacing:0.56px;">5</div>
<div class="t" style="left:372.28px;top:237.68px;font-size:12.4px;color:#111;font-family:'Liberation Mono', monospace;letter-spacing:0.56px;">6</div>
<div class="t" style="left:413.71px;top:238.34px;font-size:11.6px;font-family:'Liberation Mono', monospace;letter-spacing:0.468px;transform:scaleX(1.0770);transform-origin:0 0;"><span style="color:#0000e6;">public</span><span style="color:#000000;"> </span><span style="color:#0000e6;">class</span><span style="color:#000000;"> </span><span style="color:#000000;font-weight:bold;">TelaLogin</span><span style="color:#000000;"> </span><span style="color:#0000e6;">extends</span><span style="color:#000000;"> javax.swing.JFrame {</span></div>
<div class="t" style="left:372.28px;top:255.68px;font-size:12.4px;color:#111;font-family:'Liberation Mono', monospace;letter-spacing:0.56px;">7</div>
<div class="t" style="left:372.28px;top:273.68px;font-size:12.4px;color:#111;font-family:'Liberation Mono', monospace;letter-spacing:0.56px;">8</div>
<div class="t" style="left:413.71px;top:274.34px;font-size:11.6px;font-family:'Liberation Mono', monospace;letter-spacing:0.468px;transform:scaleX(1.0770);transform-origin:0 0;"><span style="color:#000000;">    </span><span style="color:#0000e6;">public</span><span style="color:#000000;"> </span><span style="color:#000000;font-weight:bold;">TelaLogin</span><span style="color:#000000;">() {</span></div>
<div class="t" style="left:372.28px;top:291.68px;font-size:12.4px;color:#111;font-family:'Liberation Mono', monospace;letter-spacing:0.56px;">9</div>
<div class="t" style="left:413.71px;top:292.34px;font-size:11.6px;font-family:'Liberation Mono', monospace;letter-spacing:0.468px;transform:scaleX(1.0770);transform-origin:0 0;"><span style="color:#000000;">        initComponents();</span></div>
<div class="t" style="left:364.28px;top:309.68px;font-size:12.4px;color:#111;font-family:'Liberation Mono', monospace;letter-spacing:0.56px;">10</div>
<div class="t" style="left:364.28px;top:327.68px;font-size:12.4px;color:#111;font-family:'Liberation Mono', monospace;letter-spacing:0.56px;">11</div>
<div class="t" style="left:413.71px;top:328.34px;font-size:11.6px;font-family:'Liberation Mono', monospace;letter-spacing:0.468px;transform:scaleX(1.0770);transform-origin:0 0;"><span style="color:#000000;">    }</span></div>
<div class="t" style="left:364.28px;top:345.68px;font-size:12.4px;color:#111;font-family:'Liberation Mono', monospace;letter-spacing:0.56px;">12</div>
<div class="t" style="left:364.28px;top:363.68px;font-size:12.4px;color:#111;font-family:'Liberation Mono', monospace;letter-spacing:0.56px;">13</div>
<div class="t" style="left:413.71px;top:364.34px;font-size:11.6px;font-family:'Liberation Mono', monospace;letter-spacing:0.468px;transform:scaleX(1.0770);transform-origin:0 0;"><span style="color:#000000;">    @SuppressWarnings(</span><span style="color:#ce7b00;">"unchecked"</span><span style="color:#000000;">)</span></div>
<div class="t" style="left:364.28px;top:381.68px;font-size:12.4px;color:#111;font-family:'Liberation Mono', monospace;letter-spacing:0.56px;">14</div>
<div class="t" style="left:356.28px;top:399.68px;font-size:12.4px;color:#111;font-family:'Liberation Mono', monospace;letter-spacing:0.56px;">148</div>
<div class="t" style="left:356.28px;top:417.68px;font-size:12.4px;color:#111;font-family:'Liberation Mono', monospace;letter-spacing:0.56px;">149</div>
<div class="t" style="left:413.71px;top:418.34px;font-size:11.6px;font-family:'Liberation Mono', monospace;letter-spacing:0.468px;transform:scaleX(1.0770);transform-origin:0 0;"><span style="color:#000000;">    </span><span style="color:#0000e6;">private</span><span style="color:#000000;"> </span><span style="color:#0000e6;">void</span><span style="color:#000000;"> </span><span style="color:#000000;font-weight:bold;">botaoEntrarActionPerformed</span><span style="color:#000000;">(java.awt.event.ActionEvent evt) {</span></div>
<div class="t" style="left:356.28px;top:435.68px;font-size:12.4px;color:#111;font-family:'Liberation Mono', monospace;letter-spacing:0.56px;">150</div>
<div class="t" style="left:356.28px;top:453.68px;font-size:12.4px;color:#111;font-family:'Liberation Mono', monospace;letter-spacing:0.56px;">151</div>
<div class="t" style="left:413.71px;top:454.34px;font-size:11.6px;font-family:'Liberation Mono', monospace;letter-spacing:0.468px;transform:scaleX(1.0770);transform-origin:0 0;"><span style="color:#000000;">        String auxAdministrador = </span><span style="color:#009900;">campoAdministrador</span><span style="color:#000000;">.getText();</span></div>
<div class="t" style="left:356.28px;top:471.68px;font-size:12.4px;color:#111;font-family:'Liberation Mono', monospace;letter-spacing:0.56px;">152</div>
<div class="t" style="left:356.28px;top:489.68px;font-size:12.4px;color:#111;font-family:'Liberation Mono', monospace;letter-spacing:0.56px;">153</div>
<div class="t" style="left:413.71px;top:490.34px;font-size:11.6px;font-family:'Liberation Mono', monospace;letter-spacing:0.468px;transform:scaleX(1.0770);transform-origin:0 0;"><span style="color:#000000;">        </span><span style="color:#0000e6;">if</span><span style="color:#000000;"> (</span><span style="color:#009900;">campoEmpresa</span><span style="color:#000000;">.getText().equals("")  </span><span style="color:#009900;">campoSenha</span><span style="color:#000000;">.getText().eq</span><span style="color:#000000;">                      </span><span style="color:#000000;">uals(</span><span style="color:#ce7b00;">"xptol23"</span><span style="color:#000000;">)</span></div>
<div class="t" style="left:356.28px;top:507.68px;font-size:12.4px;color:#111;font-family:'Liberation Mono', monospace;letter-spacing:0.56px;">154</div>
<div class="t" style="left:413.71px;top:508.34px;font-size:11.6px;font-family:'Liberation Mono', monospace;letter-spacing:0.468px;transform:scaleX(1.0770);transform-origin:0 0;"><span style="color:#000000;">                || </span><span style="color:#009900;">campoAdministrador</span><span style="color:#000000;">.getText().isEmpty() == </span><span style="color:#0000e6;">false</span><span style="color:#000000;">) {</span></div>
<div class="t" style="left:356.28px;top:525.68px;font-size:12.4px;color:#111;font-family:'Liberation Mono', monospace;letter-spacing:0.56px;">155</div>
<div class="t" style="left:356.28px;top:543.68px;font-size:12.4px;color:#111;font-family:'Liberation Mono', monospace;letter-spacing:0.56px;">156</div>
<div class="t" style="left:413.71px;top:544.34px;font-size:11.6px;font-family:'Liberation Mono', monospace;letter-spacing:0.468px;transform:scaleX(1.0770);transform-origin:0 0;"><span style="color:#000000;">            FormularioCadastro formularioCadastro = </span><span style="color:#0000e6;">new</span><span style="color:#000000;"> FormularioCadastro();</span></div>
<div class="t" style="left:356.28px;top:561.68px;font-size:12.4px;color:#111;font-family:'Liberation Mono', monospace;letter-spacing:0.56px;">157</div>
<div class="t" style="left:413.71px;top:562.34px;font-size:11.6px;font-family:'Liberation Mono', monospace;letter-spacing:0.468px;transform:scaleX(1.0770);transform-origin:0 0;"><span style="color:#000000;">            formularioCadastro.setDefaultCloseOperation(WindowConstants.DISPOSE_ON_CLOSE);</span></div>
<div class="t" style="left:356.28px;top:579.68px;font-size:12.4px;color:#111;font-family:'Liberation Mono', monospace;letter-spacing:0.56px;">158</div>
<div class="t" style="left:413.71px;top:580.34px;font-size:11.6px;font-family:'Liberation Mono', monospace;letter-spacing:0.468px;transform:scaleX(1.0770);transform-origin:0 0;"><span style="color:#000000;">            formularioCadastro.setVisible(</span><span style="color:#0000e6;">true</span><span style="color:#000000;">);</span></div>
<div class="t" style="left:356.28px;top:597.68px;font-size:12.4px;color:#111;font-family:'Liberation Mono', monospace;letter-spacing:0.56px;">159</div>
<div class="t" style="left:356.28px;top:615.68px;font-size:12.4px;color:#111;font-family:'Liberation Mono', monospace;letter-spacing:0.56px;">160</div>
<div class="t" style="left:413.71px;top:616.34px;font-size:11.6px;font-family:'Liberation Mono', monospace;letter-spacing:0.468px;transform:scaleX(1.0770);transform-origin:0 0;"><span style="color:#000000;">            JOptionPane.</span><span style="color:#000000;font-style:italic;">showMessageDialog</span><span style="color:#000000;">(</span><span style="color:#0000e6;">null</span><span style="color:#000000;">, </span><span style="color:#ce7b00;">"Login efetuado com sucesso!"</span><span style="color:#000000;"> + </span><span style="color:#000000;">             </span><span style="color:#ce7b00;">"\nAdministrador:"</span><span style="color:#000000;"> + auxAdministrador);</span></div>
<div class="t" style="left:356.28px;top:633.68px;font-size:12.4px;color:#111;font-family:'Liberation Mono', monospace;letter-spacing:0.56px;">161</div>
<div class="t" style="left:356.28px;top:651.68px;font-size:12.4px;color:#111;font-family:'Liberation Mono', monospace;letter-spacing:0.56px;">162</div>
<div class="t" style="left:413.71px;top:652.34px;font-size:11.6px;font-family:'Liberation Mono', monospace;letter-spacing:0.468px;transform:scaleX(1.0770);transform-origin:0 0;"><span style="color:#000000;">        } </span><span style="color:#0000e6;">else</span><span style="color:#000000;"> {</span></div>
<div class="t" style="left:356.28px;top:669.68px;font-size:12.4px;color:#111;font-family:'Liberation Mono', monospace;letter-spacing:0.56px;">163</div>
<div class="t" style="left:413.71px;top:670.34px;font-size:11.6px;font-family:'Liberation Mono', monospace;letter-spacing:0.468px;transform:scaleX(1.0770);transform-origin:0 0;"><span style="color:#000000;">            JOptionPane.</span><span style="color:#000000;font-style:italic;">showMessageDialog</span><span style="color:#000000;">(</span><span style="color:#0000e6;">null</span><span style="color:#000000;">, </span><span style="color:#ce7b00;">"Dados incorretos!"</span><span style="color:#000000;">                       </span><span style="color:#000000;">;</span></div>
<div class="t" style="left:356.28px;top:687.68px;font-size:12.4px;color:#111;font-family:'Liberation Mono', monospace;letter-spacing:0.56px;">164</div>
<div class="t" style="left:413.71px;top:688.34px;font-size:11.6px;font-family:'Liberation Mono', monospace;letter-spacing:0.468px;transform:scaleX(1.0770);transform-origin:0 0;"><span style="color:#000000;">        }</span></div>
<div class="t" style="left:356.28px;top:705.68px;font-size:12.4px;color:#111;font-family:'Liberation Mono', monospace;letter-spacing:0.56px;">165</div>
<div class="t" style="left:356.28px;top:723.68px;font-size:12.4px;color:#111;font-family:'Liberation Mono', monospace;letter-spacing:0.56px;">166</div>
<div class="t" style="left:413.71px;top:724.34px;font-size:11.6px;font-family:'Liberation Mono', monospace;letter-spacing:0.468px;transform:scaleX(1.0770);transform-origin:0 0;"><span style="color:#000000;">    }</span></div>
<div class="a" style="left:446px;top:379px;width:116px;height:17px;background:#ffffff;border:1px solid #c8c8c8;box-sizing:border-box;"></div>
<div class="t" style="left:448.52px;top:382.34px;font-size:11.6px;color:#8a8a8a;font-family:'Liberation Mono', monospace;letter-spacing:1.04px;">Generated Code</div>
<div class="a" style="left:391px;top:184px;width:11px;height:11px;background:#ffffff;border:1px solid #6e6e6e;box-sizing:border-box;"></div>
<div class="a" style="left:393px;top:189px;width:7px;height:1px;background:#444;"></div>
<div class="a" style="left:396px;top:195px;width:1px;height:12px;background:#555;"></div>
<div class="a" style="left:396px;top:207px;width:6px;height:1px;background:#555;"></div>
<div class="a" style="left:391px;top:274px;width:11px;height:11px;background:#ffffff;border:1px solid #6e6e6e;box-sizing:border-box;"></div>
<div class="a" style="left:393px;top:279px;width:7px;height:1px;background:#444;"></div>
<div class="a" style="left:396px;top:285px;width:1px;height:48px;background:#555;"></div>
<div class="a" style="left:396px;top:333px;width:6px;height:1px;background:#555;"></div>
<div class="a" style="left:391px;top:382px;width:11px;height:11px;background:#ffffff;border:1px solid #6e6e6e;box-sizing:border-box;"></div>
<div class="a" style="left:393px;top:387px;width:7px;height:1px;background:#444;"></div>
<div class="a" style="left:396px;top:384px;width:1px;height:7px;background:#444;"></div>
<div class="a" style="left:391px;top:418px;width:11px;height:11px;background:#ffffff;border:1px solid #6e6e6e;box-sizing:border-box;"></div>
<div class="a" style="left:393px;top:423px;width:7px;height:1px;background:#444;"></div>
<div class="a" style="left:396px;top:429px;width:1px;height:300px;background:#555;"></div>
<div class="a" style="left:396px;top:729px;width:6px;height:1px;background:#555;"></div>
<div class="a" style="left:4px;top:59px;width:2px;height:2px;background:#a8a8a8;"></div>
<div class="a" style="left:4px;top:62px;width:2px;height:2px;background:#a8a8a8;"></div>
<div class="a" style="left:4px;top:65px;width:2px;height:2px;background:#a8a8a8;"></div>
<div class="a" style="left:4px;top:68px;width:2px;height:2px;background:#a8a8a8;"></div>
<div class="a" style="left:4px;top:71px;width:2px;height:2px;background:#a8a8a8;"></div>
<div class="a" style="left:4px;top:74px;width:2px;height:2px;background:#a8a8a8;"></div>
<div class="a" style="left:4px;top:77px;width:2px;height:2px;background:#a8a8a8;"></div>
<div class="a" style="left:4px;top:80px;width:2px;height:2px;background:#a8a8a8;"></div>
<svg class="a" style="left:12px;top:59px;" width="22" height="24" viewBox="0 0 22 24"><path d="M3.5 3.5 H14 L20.5 10 V21.5 H3.5Z" fill="#e6ebf1" stroke="#6b737c" stroke-width="1"/><path d="M14 3.5 V10 H20.5" fill="#d0d6de" stroke="#8a939c" stroke-width="0.8"/><path d="M4 1 H7 V4 H10 V7 H7 V10 H4 V7 H1 V4 H4Z" fill="#7ee05a" stroke="#1e8a1e" stroke-width="1.2"/></svg>
<svg class="a" style="left:41px;top:59px;" width="24" height="24" viewBox="0 0 24 24"><rect x="2.5" y="3.5" width="20" height="18" fill="#f6c587" stroke="#9a6a30" stroke-width="1"/><path d="M3 6.5 H22" stroke="#fbe0b8" stroke-width="1.5"/><path d="M4 1 H7 V4 H10 V7 H7 V10 H4 V7 H1 V4 H4Z" fill="#7ee05a" stroke="#1e8a1e" stroke-width="1.2"/></svg>
<svg class="a" style="left:72px;top:59px;" width="24" height="24" viewBox="0 0 24 24"><path d="M0.5 4 H4 L6 2 H9 V21.5 H0.5Z" fill="#c9d9ea" stroke="#6b7f95" stroke-width="1"/><rect x="12.5" y="1.5" width="9" height="8" fill="#f2b468" stroke="#9a6a30" stroke-width="1"/><path d="M17 9.5 V12" stroke="#555" stroke-width="1"/><path d="M0.5 12.5 H8 L10 11 H22.5 V21.5 H0.5Z" fill="#4f7499" stroke="#2d4a66" stroke-width="1"/></svg>
<svg class="a" style="left:103px;top:59px;" width="24" height="24" viewBox="0 0 24 24"><rect x="0.5" y="1.5" width="14" height="13" rx="1.5" fill="#a9a9a9" stroke="#8a8a8a" stroke-width="1"/><rect x="7.5" y="8.5" width="14" height="13" rx="1.5" fill="#8e8e8e" stroke="#858585" stroke-width="1"/><rect x="3" y="3.5" width="9" height="4" fill="#c8c8c8"/><rect x="10" y="10.5" width="9" height="4" fill="#c8c8c8"/><rect x="11" y="17" width="7" height="3" fill="#c0c0c0"/></svg>
<div class="a" style="left:135px;top:59px;width:2px;height:2px;background:#a8a8a8;"></div>
<div class="a" style="left:135px;top:62px;width:2px;height:2px;background:#a8a8a8;"></div>
<div class="a" style="left:135px;top:65px;width:2px;height:2px;background:#a8a8a8;"></div>
<div class="a" style="left:135px;top:68px;width:2px;height:2px;background:#a8a8a8;"></div>
<div class="a" style="left:135px;top:71px;width:2px;height:2px;background:#a8a8a8;"></div>
<div class="a" style="left:135px;top:74px;width:2px;height:2px;background:#a8a8a8;"></div>
<div class="a" style="left:135px;top:77px;width:2px;height:2px;background:#a8a8a8;"></div>
<div class="a" style="left:135px;top:80px;width:2px;height:2px;background:#a8a8a8;"></div>
<svg class="a" style="left:142px;top:59px;" width="24" height="24" viewBox="0 0 24 24"><path d="M5 11.5 Q8 5 14 6 Q20.5 7.5 20.5 13.5 Q20 20 13 20.5" fill="none" stroke="#a86a10" stroke-width="5.2" stroke-linecap="round"/><path d="M5 11.5 Q8 5 14 6 Q20.5 7.5 20.5 13.5 Q20 20 13 20.5" fill="none" stroke="#f2a83a" stroke-width="3.4" stroke-linecap="round"/><path d="M1 4 L3 14 L11 11Z" fill="#f2a83a" stroke="#a86a10" stroke-width="1"/></svg>
<svg class="a" style="left:172px;top:59px;" width="24" height="24" viewBox="0 0 24 24"><path d="M19 11.5 Q16 5 10 6 Q3.5 7.5 3.5 13.5 Q4 20 11 20.5" fill="none" stroke="#8e9eac" stroke-width="5.2" stroke-linecap="round"/><path d="M19 11.5 Q16 5 10 6 Q3.5 7.5 3.5 13.5 Q4 20 11 20.5" fill="none" stroke="#b3c0cb" stroke-width="3.4" stroke-linecap="round"/><path d="M23 4 L21 14 L13 11Z" fill="#b3c0cb" stroke="#8e9eac" stroke-width="1"/></svg>
<div class="a" style="left:204px;top:59px;width:2px;height:2px;background:#a8a8a8;"></div>
<div class="a" style="left:204px;top:62px;width:2px;height:2px;background:#a8a8a8;"></div>
<div class="a" style="left:204px;top:65px;width:2px;height:2px;background:#a8a8a8;"></div>
<div class="a" style="left:204px;top:68px;width:2px;height:2px;background:#a8a8a8;"></div>
<div class="a" style="left:204px;top:71px;width:2px;height:2px;background:#a8a8a8;"></div>
<div class="a" style="left:204px;top:74px;width:2px;height:2px;background:#a8a8a8;"></div>
<div class="a" style="left:204px;top:77px;width:2px;height:2px;background:#a8a8a8;"></div>
<div class="a" style="left:204px;top:80px;width:2px;height:2px;background:#a8a8a8;"></div>
<div class="a" style="left:213px;top:60px;width:139px;height:21px;background:#ffffff;border:1px solid #b4b4b4;box-sizing:border-box;"></div>
<div class="a" style="left:332px;top:61px;width:19px;height:19px;background:#e8e8e8;"></div>
<div class="t" style="left:217px;top:63.41px;font-size:12.8px;color:#111;font-family:'Liberation Sans', sans-serif;transform:scaleX(1.0248);transform-origin:0 0;">&lt;config. default&gt;</div>
<svg class="a" style="left:336px;top:67px;" width="11" height="7" viewBox="0 0 11 7"><path d="M1 1 L5.5 5.5 L10 1" stroke="#444" stroke-width="1.2" fill="none"/></svg>
<svg class="a" style="left:361px;top:59px;" width="20" height="23" viewBox="0 0 20 23"><path d="M2 5 Q6 1.5 12 2 L18.5 5 Q18 8 16 6.5 L13 6.5 L13 8 H7 V6.5 Q4 6 2.5 8Z" fill="#f2f2f2" stroke="#444" stroke-width="1.1"/><path d="M7 8 H12.5 L12 21.5 Q10 22.5 8 21.5Z" fill="#8fc3ee" stroke="#2f6aa8" stroke-width="1.1"/><path d="M9 9 V20" stroke="#d8ecfb" stroke-width="1"/></svg>
<svg class="a" style="left:389px;top:59px;" width="27" height="23" viewBox="0 0 27 23"><path d="M2 5 Q6 1.5 12 2 L18.5 5 Q18 8 16 6.5 L13 6.5 L13 8 H7 V6.5 Q4 6 2.5 8Z" fill="#f2f2f2" stroke="#444" stroke-width="1.1"/><path d="M7 8 H12.5 L12 21.5 Q10 22.5 8 21.5Z" fill="#8fc3ee" stroke="#2f6aa8" stroke-width="1.1"/><path d="M21 4 L23 6 L20 10" stroke="#8a5a20" stroke-width="1.2" fill="none"/><path d="M18 8 Q24 9 25 14 L23 21 Q17 22 12 18 Q13 12 18 8Z" fill="#f0c070" stroke="#9a6420" stroke-width="1"/><path d="M15 13 Q20 15 24 14 M14 17 Q19 19 23.5 18" stroke="#c88a3a" stroke-width="0.9" fill="none"/></svg>
<svg class="a" style="left:430px;top:61px;" width="14" height="20" viewBox="0 0 14 20"><path d="M1 1 L13 10 L1 19Z" fill="#b9c4b0" stroke="#9aa592" stroke-width="1"/></svg>
<svg class="a" style="left:450px;top:68px;" width="7" height="4" viewBox="0 0 7 4"><path d="M0 0H7L3.5 4Z" fill="#444"/></svg>
<svg class="a" style="left:464px;top:59px;" width="24" height="23" viewBox="0 0 24 23"><path d="M1.5 1.5 H10 V21.5 H1.5Z" fill="#ecebe4" stroke="#666" stroke-width="1"/><path d="M10 1.5 H18 L17 4 L18.5 6 L17 8 V21.5 H10Z" fill="#e9e6e0" stroke="#777" stroke-width="1"/><path d="M6 2 V5 M4.5 3.5 H7.5" stroke="#5a7aa0" stroke-width="1"/><rect x="3.5" y="7" width="5" height="5" fill="#f4d0d0" stroke="#b03a3a" stroke-width="1"/><text x="3.3" y="19.5" font-size="8" font-family="Liberation Sans" fill="#555">3</text><rect x="11.5" y="6" width="5" height="5" fill="#f0a0a0"/><path d="M14 8 L23 15 L14 22Z" fill="#5ad04a" stroke="#1e8a1e" stroke-width="1.1"/></svg>
<svg class="a" style="left:492px;top:68px;" width="7" height="4" viewBox="0 0 7 4"><path d="M0 0H7L3.5 4Z" fill="#444"/></svg>
<svg class="a" style="left:504px;top:59px;" width="24" height="23" viewBox="0 0 24 23"><circle cx="11" cy="11.5" r="10" fill="#e6f0f8" stroke="#555" stroke-width="1.3"/><circle cx="11" cy="11.5" r="8" fill="none" stroke="#9ab" stroke-width="0.6" stroke-dasharray="0.8 3"/><path d="M11 3.5 V11" stroke="#e07030" stroke-width="1.6"/><path d="M12.5 7 L23 14.5 L12.5 22Z" fill="#5ad04a" stroke="#1e8a1e" stroke-width="1.1"/></svg>
<svg class="a" style="left:533px;top:68px;" width="7" height="4" viewBox="0 0 7 4"><path d="M0 0H7L3.5 4Z" fill="#444"/></svg>
<div class="a" style="left:348px;top:95px;width:432px;height:1px;background:#8e8e8e;"></div>
<div class="a" style="left:349px;top:96px;width:110px;height:20px;background:linear-gradient(#f0f0f0,#e6e6e6);"></div>
<div class="a" style="left:348px;top:95px;width:1px;height:21px;background:#8e8e8e;"></div>
<div class="a" style="left:459px;top:96px;width:1px;height:20px;background:#b0b0b0;"></div>
<div class="a" style="left:460px;top:96px;width:188px;height:20px;background:linear-gradient(#f0f0f0,#e6e6e6);"></div>
<div class="a" style="left:648px;top:96px;width:1px;height:20px;background:#b0b0b0;"></div>
<div class="a" style="left:649px;top:95px;width:131px;height:21px;background:linear-gradient(#f6f9fc,#e8eef5);"></div>
<div class="a" style="left:649px;top:95px;width:131px;height:1px;background:#8aa6c4;"></div>
<div class="a" style="left:649px;top:95px;width:1px;height:21px;background:#8aa6c4;"></div>
<div class="a" style="left:779px;top:95px;width:1px;height:21px;background:#8aa6c4;"></div>
<div class="t" style="left:356px;top:99.59px;font-size:12.6px;color:#111;font-family:'Liberation Sans', sans-serif;transform:scaleX(1.0140);transform-origin:0 0;">Página Inicial</div>
<svg class="a" style="left:446px;top:101px;" width="9" height="9" viewBox="0 0 9 9"><path d="M1 1L8 8M8 1L1 8" stroke="#444" stroke-width="1.3"/></svg>
<svg class="a" style="left:465px;top:98px;" width="17" height="17" viewBox="0 0 17 17"><path d="M1.5 0.5 L10 0.5 L13.5 4 L13.5 15.5 L1.5 15.5Z" fill="#eef2f7" stroke="#6b7a8c" stroke-width="1"/><path d="M10 0.5 L10 4 L13.5 4" fill="#d8dee6" stroke="#6b7a8c" stroke-width="0.8"/><rect x="3.5" y="6" width="7" height="7" fill="#cfe0ef" stroke="#55708f" stroke-width="0.8"/><path d="M3.5 8.5H10.5M3.5 11H10.5" stroke="#55708f" stroke-width="0.7"/><path d="M10 7 L16 11 L10 15Z" fill="#3cb043" stroke="#207a28" stroke-width="0.7"/></svg>
<div class="t" style="left:483px;top:99.59px;font-size:12.6px;color:#111;font-family:'Liberation Sans', sans-serif;transform:scaleX(1.0257);transform-origin:0 0;">FormularioCadastro.java</div>
<svg class="a" style="left:635px;top:101px;" width="9" height="9" viewBox="0 0 9 9"><path d="M1 1L8 8M8 1L1 8" stroke="#444" stroke-width="1.3"/></svg>
<svg class="a" style="left:653px;top:98px;" width="17" height="17" viewBox="0 0 17 17"><path d="M1.5 0.5 L10 0.5 L13.5 4 L13.5 15.5 L1.5 15.5Z" fill="#eef2f7" stroke="#6b7a8c" stroke-width="1"/><path d="M10 0.5 L10 4 L13.5 4" fill="#d8dee6" stroke="#6b7a8c" stroke-width="0.8"/><rect x="3.5" y="6" width="7" height="7" fill="#cfe0ef" stroke="#55708f" stroke-width="0.8"/><path d="M3.5 8.5H10.5M3.5 11H10.5" stroke="#55708f" stroke-width="0.7"/><path d="M10 7 L16 11 L10 15Z" fill="#3cb043" stroke="#207a28" stroke-width="0.7"/></svg>
<div class="t" style="left:672px;top:99.59px;font-size:12.6px;color:#111;font-family:'Liberation Sans', sans-serif;transform:scaleX(1.0188);transform-origin:0 0;">TelaLogin.java</div>
<svg class="a" style="left:766px;top:101px;" width="9" height="9" viewBox="0 0 9 9"><path d="M1 1L8 8M8 1L1 8" stroke="#444" stroke-width="1.3"/></svg>
<svg class="a" style="left:1851px;top:98px;" width="8" height="12" viewBox="0 0 8 12"><path d="M7 1 L1 6 L7 11Z" fill="#c8c8c8"/></svg>
<svg class="a" style="left:1870px;top:98px;" width="8" height="12" viewBox="0 0 8 12"><path d="M1 1 L7 6 L1 11Z" fill="#c8c8c8"/></svg>
<svg class="a" style="left:1885px;top:99px;" width="12" height="7" viewBox="0 0 12 7"><path d="M0 0 H12 L6 7Z" fill="#444"/></svg>
<div class="a" style="left:1904px;top:97px;width:11px;height:9px;border:2px solid #444;box-sizing:border-box;border-top-width:3px;border-left-width:1.5px;border-right-width:1.5px;border-bottom-width:1.5px;"></div>
<div class="a" style="left:1901px;top:125px;width:10px;height:10px;background:#ffffff;border:1px solid #333;box-sizing:border-box;"></div>
<svg class="a" style="left:1902px;top:126px;" width="8" height="8" viewBox="0 0 8 8"><path d="M4 0V8M0 4H8" stroke="#111" stroke-width="2"/></svg>
<svg class="a" style="left:637px;top:121px;" width="20" height="19" viewBox="0 0 20 19"><rect x="1.5" y="2.5" width="3" height="14" fill="#dde6f0" stroke="#5a6f88" stroke-width="1"/><path d="M5 2.5 H14 V16.5 H5" fill="#f4f7fa" stroke="#5a6f88" stroke-width="1"/><path d="M18 6 L10 6 L10 3 L6 9 L10 15 L10 12 L18 12Z" fill="#f2a93a" stroke="#a06010" stroke-width="0.9"/></svg>
<svg class="a" style="left:661px;top:121px;" width="18" height="19" viewBox="0 0 18 19"><rect x="1.5" y="2.5" width="13" height="13" fill="#d0d0d0" stroke="#aaa" stroke-width="1"/><path d="M16 12 L9 12 L9 9 L5 13 L9 17 L9 14 L16 14Z" fill="#c0b8a8" stroke="#aaa" stroke-width="0.8"/></svg>
<svg class="a" style="left:682px;top:128px;" width="6" height="4" viewBox="0 0 6 4"><path d="M0 0H6L3 4Z" fill="#555"/></svg>
<svg class="a" style="left:693px;top:121px;" width="18" height="19" viewBox="0 0 18 19"><rect x="1.5" y="2.5" width="13" height="13" fill="#d0d0d0" stroke="#aaa" stroke-width="1"/><path d="M3 12 L10 12 L10 9 L14 13 L10 17 L10 14 L3 14Z" fill="#c0b8a8" stroke="#aaa" stroke-width="0.8"/></svg>
<svg class="a" style="left:714px;top:128px;" width="6" height="4" viewBox="0 0 6 4"><path d="M0 0H6L3 4Z" fill="#555"/></svg>
<div class="a" style="left:726px;top:121px;width:1px;height:19px;background:#9a9a9a;"></div>
<svg class="a" style="left:731px;top:121px;" width="20" height="19" viewBox="0 0 20 19"><rect x="1.5" y="1.5" width="11" height="7" fill="#f2b04a" stroke="#9a6010" stroke-width="1"/><circle cx="9" cy="9" r="5" fill="#e9eef4" stroke="#222" stroke-width="1.6"/><path d="M12.5 12.5 L17 17" stroke="#222" stroke-width="2.5"/></svg>
<svg class="a" style="left:753px;top:121px;" width="20" height="19" viewBox="0 0 20 19"><rect x="5.5" y="1.5" width="12" height="7" fill="#f2b04a" stroke="#9a6010" stroke-width="1"/><path d="M16 13 H8 V10 L2 14.5 L8 19 V16 H16Z" fill="#6ab8f0" stroke="#1e5a9a" stroke-width="1"/></svg>
<svg class="a" style="left:776px;top:121px;" width="20" height="19" viewBox="0 0 20 19"><rect x="5.5" y="1.5" width="12" height="7" fill="#f2b04a" stroke="#9a6010" stroke-width="1"/><path d="M2 13 H10 V10 L16 14.5 L10 19 V16 H2Z" fill="#6ab8f0" stroke="#1e5a9a" stroke-width="1"/></svg>
<svg class="a" style="left:799px;top:121px;" width="20" height="19" viewBox="0 0 20 19"><rect x="1.5" y="2.5" width="12" height="7" fill="#f2b04a" stroke="#9a6010" stroke-width="1"/><rect x="5.5" y="9.5" width="12" height="7" fill="#c8c8c8" stroke="#555" stroke-width="1"/></svg>
<svg class="a" style="left:822px;top:121px;" width="20" height="19" viewBox="0 0 20 19"><rect x="1.5" y="2.5" width="13" height="11" fill="none" stroke="#333" stroke-width="1" stroke-dasharray="2 1.2"/><path d="M12 10 L18 15 L14 15.5 L12 19Z" fill="#333"/></svg>
<div class="a" style="left:847px;top:121px;width:1px;height:19px;background:#9a9a9a;"></div>
<svg class="a" style="left:851px;top:121px;" width="20" height="19" viewBox="0 0 20 19"><path d="M8 18 V10 H4 L9 3 L14 10 H10 V18Z" fill="#f2a93a" stroke="#a06010" stroke-width="1"/><path d="M11 3 H17 L19 6 L17 9 H13Z" fill="#8ed0f0" stroke="#2a7aa0" stroke-width="0.9"/></svg>
<svg class="a" style="left:874px;top:121px;" width="20" height="19" viewBox="0 0 20 19"><path d="M8 1 V9 H4 L9 16 L14 9 H10 V1Z" fill="#f2a93a" stroke="#a06010" stroke-width="1"/><path d="M11 12 H17 L19 15 L17 18 H13Z" fill="#8ed0f0" stroke="#2a7aa0" stroke-width="0.9"/></svg>
<svg class="a" style="left:897px;top:121px;" width="20" height="19" viewBox="0 0 20 19"><path d="M2 2 H9 L11 5 L9 8 H2Z" fill="#8ed0f0" stroke="#2a7aa0" stroke-width="0.9"/><path d="M9 11 H16 L18 14 L16 17 H9Z" fill="#d8d8d8" stroke="#666" stroke-width="0.9"/><path d="M5 8 V13 H9" stroke="#444" stroke-width="0.8" fill="none"/></svg>
<div class="a" style="left:920px;top:121px;width:1px;height:19px;background:#9a9a9a;"></div>
<svg class="a" style="left:925px;top:121px;" width="22" height="19" viewBox="0 0 22 19"><path d="M10 5 H4 V2 L0.5 6.5 L4 11 V8 H10Z" fill="#8ed0f0" stroke="#1e5a9a" stroke-width="0.9"/><path d="M12 2 H15 M12 5 H15 M12 8 H15 M2 13 H15 M2 16 H15" stroke="#444" stroke-width="1.5"/></svg>
<svg class="a" style="left:948px;top:121px;" width="22" height="19" viewBox="0 0 22 19"><path d="M1 5 H7 V2 L10.5 6.5 L7 11 V8 H1Z" fill="#8ed0f0" stroke="#1e5a9a" stroke-width="0.9"/><path d="M12 2 H15 M12 5 H15 M12 8 H15 M2 13 H15 M2 16 H15" stroke="#444" stroke-width="1.5"/></svg>
<div class="a" style="left:973px;top:121px;width:1px;height:19px;background:#9a9a9a;"></div>
<svg class="a" style="left:979px;top:121px;" width="20" height="19" viewBox="0 0 20 19"><circle cx="10" cy="10" r="6.5" fill="#f06060" stroke="#c04040" stroke-width="0.8"/></svg>
<svg class="a" style="left:1002px;top:121px;" width="20" height="19" viewBox="0 0 20 19"><rect x="3.5" y="3.5" width="12" height="12" fill="#c0c0c0" stroke="#888" stroke-width="1"/></svg>
<div class="a" style="left:1027px;top:121px;width:1px;height:19px;background:#9a9a9a;"></div>
<svg class="a" style="left:1031px;top:121px;" width="20" height="19" viewBox="0 0 20 19"><path d="M2 12 H17 M2 15 H17 M2 18 H17" stroke="#555" stroke-width="1.5"/><path d="M4 9 L7 2 M8 9 L11 2 M12 9 L15 2" stroke="#30b030" stroke-width="2"/></svg>
<svg class="a" style="left:1054px;top:121px;" width="20" height="19" viewBox="0 0 20 19"><path d="M2 12 H17 M2 15 H17 M2 18 H17 M12 9 H17 M14 6 H17" stroke="#222" stroke-width="1.5"/></svg>
<div class="a" style="left:1903px;top:223px;width:12px;height:2px;background:#a8b070;"></div>
<div class="a" style="left:1903px;top:483px;width:12px;height:3px;background:#f0b800;"></div>
<div class="a" style="left:1903px;top:507px;width:12px;height:3px;background:#f0b800;"></div>
<div class="a" style="left:1903px;top:515px;width:12px;height:3px;background:#f0b800;"></div>
<svg class="a" style="left:357px;top:738px;" width="18" height="17" viewBox="0 0 18 17"><path d="M8 1 L13 6 L8 11 L3 6Z" fill="#f0c860" stroke="#9a7010" stroke-width="0.9"/><rect x="1" y="8" width="8" height="7" fill="#a9cdf0" stroke="#3f6ea0" stroke-width="0.9"/><circle cx="12" cy="11.5" r="4" fill="#f08a8a" stroke="#b04040" stroke-width="0.8"/></svg>
<div class="t" style="left:379px;top:739.59px;font-size:12.6px;color:#111;font-family:'Liberation Sans', sans-serif;transform:scaleX(0.9953);transform-origin:0 0;">trabalho3PoeNivaldo.TelaLogin</div>
<svg class="a" style="left:559px;top:739px;" width="10" height="16" viewBox="0 0 10 16"><path d="M2 1 L8 8 L2 15" stroke="#666" stroke-width="1.2" fill="none"/><path d="M0.5 3 L5 8 L0.5 13" stroke="#aaa" stroke-width="1" fill="none"/></svg>
<svg class="a" style="left:586px;top:741px;" width="12" height="12" viewBox="0 0 12 12"><path d="M6 0.8 L11.2 6 L6 11.2 L0.8 6Z" fill="#f6d27a" stroke="#b5862a" stroke-width="1"/></svg>
<div class="t" style="left:602px;top:739.59px;font-size:12.6px;color:#111;font-family:'Liberation Sans', sans-serif;transform:scaleX(0.9939);transform-origin:0 0;">TelaLogin</div>
<svg class="a" style="left:662px;top:739px;" width="10" height="16" viewBox="0 0 10 16"><path d="M2 1 L8 8 L2 15" stroke="#666" stroke-width="1.2" fill="none"/><path d="M0.5 3 L5 8 L0.5 13" stroke="#aaa" stroke-width="1" fill="none"/></svg>
<svg class="a" style="left:1901px;top:741px;" width="10" height="10" viewBox="0 0 10 10"><path d="M1 1L9 9M9 1L1 9" stroke="#444" stroke-width="1.4"/></svg>
<svg class="a" style="left:351px;top:785px;" width="18" height="16" viewBox="0 0 18 16"><path d="M1.5 0.5 L8 7.5 L1.5 14.5Z M7.5 0.5 L14.5 7.5 L7.5 14.5Z" fill="#bac5b2" stroke="#9aa592" stroke-width="0.9"/></svg>
<svg class="a" style="left:351px;top:808px;" width="18" height="16" viewBox="0 0 18 16"><path d="M1.5 0.5 L8 7.5 L1.5 14.5Z M7.5 0.5 L14.5 7.5 L7.5 14.5Z" fill="#bac5b2" stroke="#9aa592" stroke-width="0.9"/></svg>
<div class="a" style="left:353px;top:832px;width:14px;height:14px;background:linear-gradient(#fbb0a8,#f07068);border:1px solid #a83a3a;box-sizing:border-box;"></div>
<div class="a" style="left:357px;top:836px;width:6px;height:6px;background:#fff4f2;border:1px solid #d86060;box-sizing:border-box;"></div>
<svg class="a" style="left:351px;top:853px;" width="18" height="18" viewBox="0 0 18 18"><circle cx="4" cy="3.5" r="2.5" fill="#f0c840" stroke="#6a5010" stroke-width="0.9"/><path d="M15 4 Q12 2 10.5 5 Q10 7 11 8 L4 13 Q2 12 1.5 14 Q2 17 4.5 16 Q5.5 15.5 5 14.5 L12 10 Q14 11 16 9 Q17 7.5 16 6.5 L14 8 L12.5 6.5Z" fill="#ffffff" stroke="#2a3a4a" stroke-width="1.3" stroke-linejoin="round"/><rect x="11" y="12" width="6" height="4" rx="1" fill="#fff" stroke="#2a3a4a" stroke-width="1.1"/></svg>
<div class="a" style="left:1708px;top:1011px;width:11px;height:11px;background:#e8e8e8;border:1px solid #444;box-sizing:border-box;"></div>
<svg class="a" style="left:1709px;top:1012px;" width="9" height="9" viewBox="0 0 9 9"><path d="M1.5 1.5L7.5 7.5M7.5 1.5L1.5 7.5" stroke="#333" stroke-width="2"/></svg>
<svg class="a" style="left:1738px;top:1008px;" width="18" height="19" viewBox="0 0 18 19"><path d="M9 1.5 A7 7 0 1 1 5 14 L4 18 L7 15 A7 7 0 0 1 9 1.5Z" fill="#fafafa" stroke="#333" stroke-width="1"/><text x="6.5" y="12.5" font-size="9" font-family="Liberation Serif" font-weight="bold" fill="#111">1</text></svg>
<svg class="a" style="left:20px;top:1045px;" width="21" height="21" viewBox="0 0 21 21"><path d="M0 3 L8.5 1.8 V9.7 H0Z M9.7 1.6 L21 0 V9.7 H9.7Z M0 10.9 H8.5 V18.8 L0 17.6Z M9.7 10.9 H21 V20.6 L9.7 19Z" fill="#ffffff"/></svg>
<svg class="a" style="left:71px;top:1041px;" width="28" height="28" viewBox="0 0 28 28"><circle cx="14" cy="14" r="11.5" fill="none" stroke="#111" stroke-width="2.6"/></svg>
<div class="t" style="left:111px;top:1045.98px;font-size:17.7px;color:#333;font-family:'Liberation Sans', sans-serif;transform:scaleX(1.0017);transform-origin:0 0;">Digite aqui para pesquisar</div>
<svg class="a" style="left:457px;top:1045px;" width="15" height="20" viewBox="0 0 15 20"><rect x="4" y="1" width="7" height="12" rx="3.5" fill="none" stroke="#333" stroke-width="1.6"/><path d="M1.5 9 Q1.5 15.5 7.5 15.5 Q13.5 15.5 13.5 9 M7.5 15.5 V19 M4 19 H11" stroke="#333" stroke-width="1.5" fill="none"/></svg>
<svg class="a" style="left:509px;top:1045px;" width="22" height="20" viewBox="0 0 22 20"><rect x="1" y="4" width="13" height="12" fill="none" stroke="#fff" stroke-width="1.6"/><path d="M1 1 H14 M1 19 H14" stroke="#fff" stroke-width="1.6"/><path d="M19 1 V19" stroke="#fff" stroke-width="1.6"/><rect x="17.5" y="6" width="3" height="3" fill="#fff"/></svg>
<svg class="a" style="left:569px;top:1041px;" width="30" height="28" viewBox="0 0 30 28"><path d="M1 4 H11 L13 6 H29 V26 H1Z" fill="#f7d774" stroke="#d8a830" stroke-width="0.8"/><path d="M1 9 H29 V26 H1Z" fill="#fbe38e"/><rect x="5" y="17" width="20" height="5" fill="#2b8fd8"/><path d="M5 17 V26 M25 17 V26" stroke="#2b8fd8" stroke-width="4"/></svg>
<svg class="a" style="left:632px;top:1041px;" width="28" height="28" viewBox="0 0 28 28"><circle cx="14" cy="14" r="13.5" fill="#db4437"/><path d="M14 14 L2.3 7.3 A13.5 13.5 0 0 0 14 27.5Z" fill="#0f9d58"/><path d="M14 14 L14 27.5 A13.5 13.5 0 0 0 25.7 7.3Z" fill="#f4c20d"/><path d="M14 14 L25.7 7.3 A13.5 13.5 0 0 0 2.3 7.3Z" fill="#db4437"/><circle cx="14" cy="14" r="6.2" fill="#fff"/><circle cx="14" cy="14" r="4.8" fill="#4285f4"/></svg>
<svg class="a" style="left:693px;top:1040px;" width="28" height="30" viewBox="0 0 28 30"><path d="M14 1 L26 7 V23 L14 29 L2 23 V7Z" fill="#a3b4dc" stroke="#3a4a9a" stroke-width="1"/><path d="M14 13 L26 7 V23 L14 29Z" fill="#d3ddef"/><path d="M2 7 L14 1 L26 7 L14 13Z" fill="#e6ecf8"/><path d="M14 13 V29" stroke="#bcc8e6" stroke-width="1"/></svg>
<div class="a" style="left:755px;top:1040px;width:30px;height:29px;background:linear-gradient(#ffffff,#dcdcdc);border:1px solid #bbb;box-sizing:border-box;border-radius:2px;"></div>
<svg class="a" style="left:759px;top:1042px;" width="22" height="25" viewBox="0 0 22 25"><path d="M11 2 Q8 5 11 8 Q14 11 11 13 M13 4 Q12 6 13 8" stroke="#e76f00" stroke-width="1.5" fill="none"/><path d="M5 15 Q11 17 17 15 M4 18 Q11 20.5 18 18 M6 21 Q11 23 16 21" stroke="#5382a1" stroke-width="1.4" fill="none"/></svg>
<div class="a" style="left:559px;top:1077px;width:51px;height:3px;background:#7eb4ea;"></div>
<div class="a" style="left:621px;top:1077px;width:51px;height:3px;background:#7eb4ea;"></div>
<div class="a" style="left:683px;top:1077px;width:51px;height:3px;background:#7eb4ea;"></div>
<div class="a" style="left:745px;top:1077px;width:51px;height:3px;background:#7eb4ea;"></div>
<svg class="a" style="left:1601px;top:1044px;" width="22" height="22" viewBox="0 0 22 22"><circle cx="13" cy="5" r="3.5" fill="none" stroke="#fff" stroke-width="1.3"/><path d="M7 14 Q13 7 19 14" stroke="#fff" stroke-width="1.3" fill="none"/><circle cx="7" cy="11" r="3.3" fill="#0c0f1a" stroke="#fff" stroke-width="1.3"/><path d="M1 21 Q7 13 13 21" stroke="#fff" stroke-width="1.3" fill="none"/></svg>
<svg class="a" style="left:1647px;top:1049px;" width="18" height="10" viewBox="0 0 18 10"><path d="M1 9 L9 1.5 L17 9" stroke="#fff" stroke-width="1.4" fill="none"/></svg>
<svg class="a" style="left:1676px;top:1046px;" width="22" height="16" viewBox="0 0 22 16"><path d="M3 2 V7 M6 2 V7 M2 7 H7 V9 Q7 11 4.5 11 Q2 11 2 9Z" stroke="#fff" stroke-width="1" fill="#fff"/><rect x="4" y="6" width="15" height="9" fill="none" stroke="#fff" stroke-width="1.3"/><rect x="6" y="8" width="12" height="5" fill="#fff"/><rect x="19" y="8.5" width="2" height="4" fill="#fff"/></svg>
<svg class="a" style="left:1708px;top:1044px;" width="18" height="18" viewBox="0 0 18 18"><path d="M1 12 A12 12 0 0 1 13 1 M3.5 14 A9 9 0 0 1 13 4.5 M6 15.5 A6 6 0 0 1 13 8 M8.5 16.5 A3.5 3.5 0 0 1 13 11.5" stroke="#fff" stroke-width="1.1" fill="none"/><circle cx="13" cy="15.5" r="1.5" fill="#fff"/></svg>
<svg class="a" style="left:1737px;top:1044px;" width="22" height="22" viewBox="0 0 22 22"><path d="M2 7 H6 L11 2 V20 L6 15 H2Z" fill="none" stroke="#fff" stroke-width="1.2"/><path d="M14 7 Q16 11 14 15 M16.5 5 Q20 11 16.5 17 M19 3 Q24 11 19 19" stroke="#fff" stroke-width="1.2" fill="none"/></svg>
<div class="t" style="left:1790px;top:1035.87px;font-size:14.5px;color:#ffffff;font-family:'Liberation Sans', sans-serif;transform:scaleX(0.9921);transform-origin:0 0;">13:28</div>
<div class="t" style="left:1770px;top:1059.87px;font-size:14.5px;color:#ffffff;font-family:'Liberation Sans', sans-serif;transform:scaleX(1.0473);transform-origin:0 0;">16/06/2020</div>
<svg class="a" style="left:1867px;top:1043px;" width="34" height="34" viewBox="0 0 34 34"><path d="M2 2 H22 V17 H8 L4 21 V17 H2Z" fill="#fff"/><path d="M6 7 H18 M6 10 H18 M6 13 H15" stroke="#0c0f1a" stroke-width="1.2"/><circle cx="22" cy="21.7" r="9.6" fill="#262626" stroke="#777" stroke-width="1"/><text x="18.6" y="26.5" font-size="13" font-family="Liberation Sans" fill="#fff">1</text></svg>
<div class="a" style="left:1915px;top:1030px;width:1px;height:50px;background:#6a6a6a;"></div>
<div class="a" style="left:765px;top:349px;width:390px;height:325px;background:#d6d9df;border:1px solid #7a7a7a;box-sizing:border-box;box-shadow:0 0 12px 3px rgba(0,0,0,0.24);"></div>
<div class="a" style="left:766px;top:350px;width:388px;height:37px;background:#ffffff;"></div>
<div class="a" style="left:774px;top:358px;width:20px;height:19px;background:linear-gradient(#ffffff,#d9dde3);border:1px solid #7d8792;box-sizing:border-box;border-radius:2px;"></div>
<svg class="a" style="left:776px;top:359px;" width="16" height="17" viewBox="0 0 16 17"><path d="M8 1.5 Q6 4 8 6 Q10 8 8 9.5 M9.5 3 Q9 4.5 9.5 6" stroke="#e76f00" stroke-width="1.3" fill="none"/><path d="M3.5 10.5 Q8 12 12.5 10.5 M3 13 Q8 15 13 13 M4.5 15.5 Q8 16.5 11.5 15.5" stroke="#5382a1" stroke-width="1.2" fill="none"/></svg>
<div class="t" style="left:778px;top:441.23px;font-size:13px;color:#111;font-family:'Liberation Sans', sans-serif;">E</div>
<div class="t" style="left:778px;top:493.73px;font-size:13px;color:#111;font-family:'Liberation Sans', sans-serif;">A</div>
<div class="t" style="left:778px;top:533.73px;font-size:13px;color:#111;font-family:'Liberation Sans', sans-serif;">S</div>
<div class="a" style="left:1128px;top:437px;width:12px;height:24px;background:#ffffff;border:1px solid #a8adb5;box-sizing:border-box;border-radius:2px;"></div>
<div class="a" style="left:1128px;top:487px;width:12px;height:24px;background:#ffffff;border:1px solid #a8adb5;box-sizing:border-box;border-radius:2px;"></div>
<div class="a" style="left:1125px;top:620px;width:14px;height:24px;background:linear-gradient(#ffffff,#dcdcdc);border:1px solid #8a8a8a;box-sizing:border-box;border-radius:4px;"></div>
<div class="a" style="left:784px;top:328px;width:352px;height:368px;background:#d6d9df;border:1px solid #8a8a8a;box-sizing:border-box;box-shadow:0 0 14px 3px rgba(0,0,0,0.22);"></div>
<div class="a" style="left:785px;top:329px;width:350px;height:36px;background:#ffffff;"></div>
<div class="a" style="left:794px;top:336px;width:20px;height:19px;background:linear-gradient(#ffffff,#d9dde3);border:1px solid #7d8792;box-sizing:border-box;border-radius:2px;"></div>
<svg class="a" style="left:796px;top:337px;" width="16" height="17" viewBox="0 0 16 17"><path d="M8 1.5 Q6 4 8 6 Q10 8 8 9.5 M9.5 3 Q9 4.5 9.5 6" stroke="#e76f00" stroke-width="1.3" fill="none"/><path d="M3.5 10.5 Q8 12 12.5 10.5 M3 13 Q8 15 13 13 M4.5 15.5 Q8 16.5 11.5 15.5" stroke="#5382a1" stroke-width="1.2" fill="none"/></svg>
<div class="t" style="left:819px;top:337.88px;font-size:15.6px;color:#9a9a9a;font-family:'Liberation Sans', sans-serif;transform:scaleX(0.9339);transform-origin:0 0;">Cadastro de Itens</div>
<div class="a" style="left:982px;top:345px;width:12px;height:1px;background:#8a8a8a;"></div>
<div class="a" style="left:1040px;top:340px;width:12px;height:12px;border:1px solid #8a8a8a;box-sizing:border-box;"></div>
<svg class="a" style="left:1098px;top:339px;" width="14" height="14" viewBox="0 0 14 14"><path d="M1 1L13 13M13 1L1 13" stroke="#8a8a8a" stroke-width="1.1"/></svg>
<div class="t" style="left:850.3px;top:372.85px;font-size:17.4px;color:#12983a;font-family:'Liberation Sans', sans-serif;transform:scaleX(0.9452);transform-origin:0 0;-webkit-text-stroke:0.55px #12983a;">TELA DE CADASTRO</div>
<div class="t" style="left:811px;top:424.23px;font-size:13px;color:#111;font-family:'Liberation Sans', sans-serif;transform:scaleX(0.9169);transform-origin:0 0;">Tipo:</div>
<div class="a" style="left:852px;top:420px;width:119px;height:22px;background:linear-gradient(#ffffff,#e4e6ea);border:1px solid #9aa0a8;box-sizing:border-box;border-radius:3px;"></div>
<div class="a" style="left:954px;top:421px;width:16px;height:20px;background:linear-gradient(#e8ecf2,#b8c2ce);border:1px solid #8a96a6;box-sizing:border-box;"></div>
<svg class="a" style="left:956px;top:426px;" width="12" height="9" viewBox="0 0 12 9"><path d="M1 1H11L6 8Z" fill="#222"/></svg>
<div class="t" style="left:857px;top:424.23px;font-size:13px;color:#111;font-family:'Liberation Sans', sans-serif;transform:scaleX(0.9435);transform-origin:0 0;">Calcado</div>
<div class="a" style="left:881px;top:598px;width:14px;height:14px;box-sizing:border-box;border:1px solid #62676e;border-radius:50%;background:radial-gradient(circle at 40% 35%,#ffffff,#dde0e5);"></div>
<div class="t" style="left:901.5px;top:598.43px;font-size:13px;color:#111;font-family:'Liberation Sans', sans-serif;transform:scaleX(0.9032);transform-origin:0 0;">30%</div>
<div class="a" style="left:813px;top:657px;width:58px;height:24px;background:linear-gradient(#ffffff,#e9eaec 55%,#dadcdf);border:1px solid #8a8d92;box-sizing:border-box;border-radius:4px;"></div>
<div class="t" style="left:825.1px;top:661.98px;font-size:13px;color:#111;font-family:'Liberation Sans', sans-serif;transform:scaleX(0.9336);transform-origin:0 0;">Salvar</div>
<div class="a" style="left:927px;top:657px;width:55px;height:24px;background:linear-gradient(#ffffff,#e9eaec 55%,#dadcdf);border:1px solid #8a8d92;box-sizing:border-box;border-radius:4px;"></div>
<div class="t" style="left:938.5px;top:661.98px;font-size:13px;color:#111;font-family:'Liberation Sans', sans-serif;transform:scaleX(0.9364);transform-origin:0 0;">Voltar</div>
<div class="a" style="left:1044px;top:657px;width:63px;height:24px;background:linear-gradient(#ffffff,#e9eaec 55%,#dadcdf);border:1px solid #8a8d92;box-sizing:border-box;border-radius:4px;"></div>
<div class="t" style="left:1055.5px;top:661.98px;font-size:13px;color:#111;font-family:'Liberation Sans', sans-serif;transform:scaleX(1.0066);transform-origin:0 0;">Limpar</div>
<div class="a" style="left:798px;top:435px;width:324px;height:159px;background:#d6d9df;border:1px solid #6a6a6a;box-sizing:border-box;box-shadow:0 2px 12px 3px rgba(0,0,0,0.30);"></div>
<div class="a" style="left:799px;top:436px;width:322px;height:31px;background:#ffffff;"></div>
<div class="t" style="left:802.4px;top:443.06px;font-size:15.4px;color:#111;font-family:'Liberation Sans', sans-serif;transform:scaleX(0.9451);transform-origin:0 0;">Mensagem</div>
<svg class="a" style="left:1093px;top:444px;" width="14" height="14" viewBox="0 0 14 14"><path d="M1 1L13 13M13 1L1 13" stroke="#111" stroke-width="1.3"/></svg>
<svg class="a" style="left:813px;top:481px;" width="48" height="48" viewBox="0 0 48 48"><defs><radialGradient id="ig" cx="45%" cy="30%" r="75%"><stop offset="0" stop-color="#8cb4f0"/><stop offset="0.6" stop-color="#3d6fc8"/><stop offset="1" stop-color="#2a55a8"/></radialGradient></defs><circle cx="24" cy="24" r="22.8" fill="url(#ig)" stroke="#2c4f94" stroke-width="1.2"/><circle cx="23.5" cy="11.5" r="3" fill="#fff"/><path d="M17 17.5 H26.5 V33 H30 V37.5 H16 V33 H19.5 V21.5 H17Z" fill="#fff"/></svg>
<div class="t" style="left:876.6px;top:500.41px;font-size:12.8px;color:#111;font-family:'Liberation Sans', sans-serif;transform:scaleX(0.9715);transform-origin:0 0;">Login efetuado com sucesso! Bem Vindo!</div>
<div class="t" style="left:876.6px;top:519.41px;font-size:12.8px;color:#111;font-family:'Liberation Sans', sans-serif;transform:scaleX(0.9556);transform-origin:0 0;">Administrador:&lt;&lt;administradorXXX&gt;&gt;</div>
<div class="a" style="left:1062px;top:551px;width:42px;height:26px;background:linear-gradient(#eef3f8,#c4d3e2);border:2px solid #4a6f9a;box-sizing:border-box;border-radius:4px;"></div>
<div class="t" style="left:1074.8px;top:556.63px;font-size:13px;color:#111;font-family:'Liberation Sans', sans-serif;transform:scaleX(0.9317);transform-origin:0 0;">OK</div>
</body></html>
